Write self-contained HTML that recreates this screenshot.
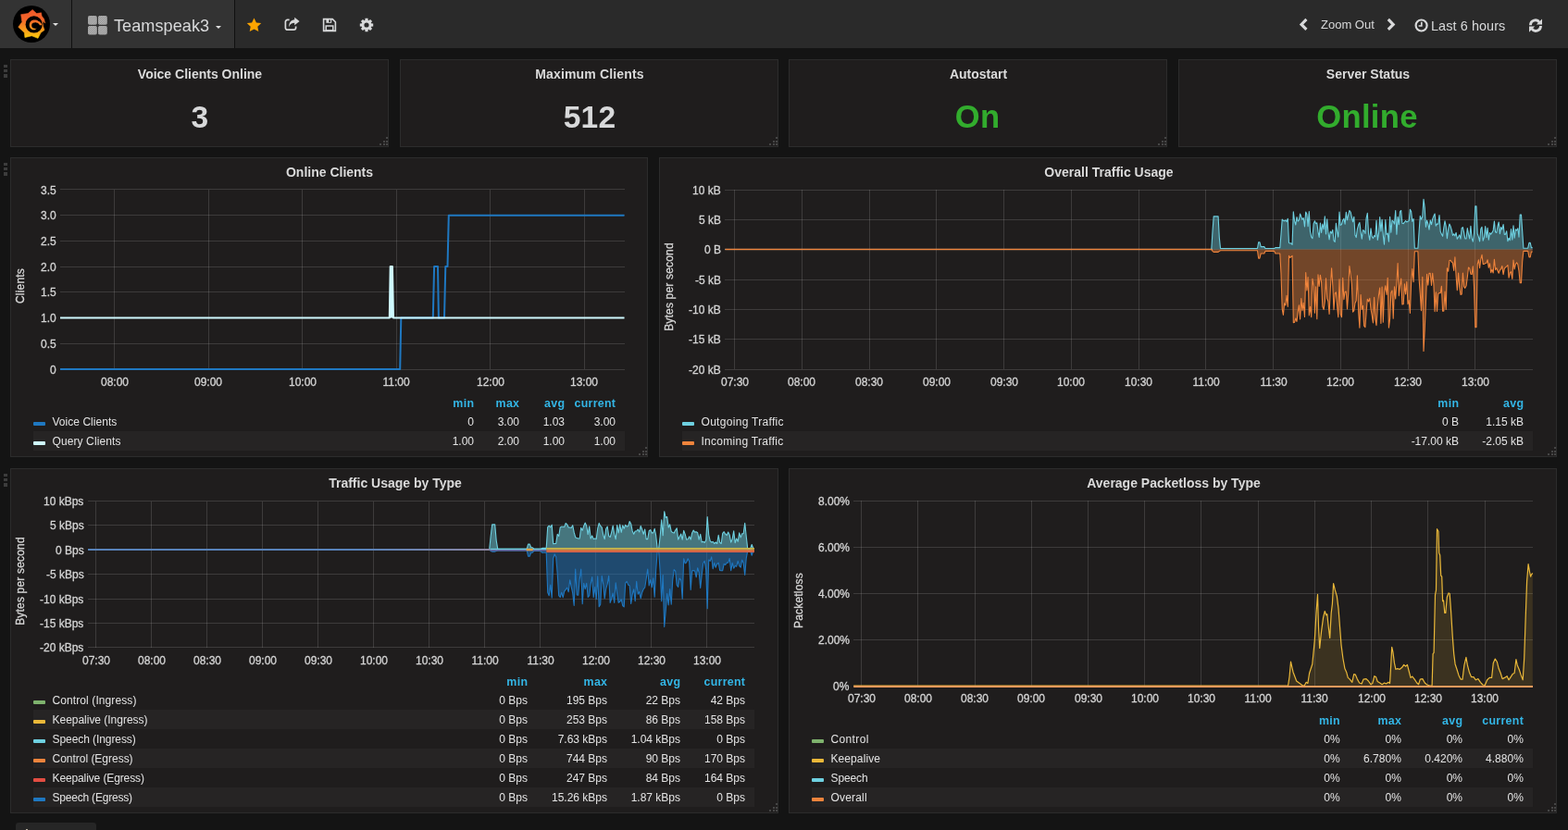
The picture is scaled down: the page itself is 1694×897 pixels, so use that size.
<!DOCTYPE html><html><head><meta charset="utf-8"><title>Grafana - Teamspeak3</title><style>
html,body{margin:0;padding:0;background:#141414;}
body{width:1694px;height:897px;overflow:hidden;position:relative;font-family:"Liberation Sans", sans-serif;color:#d8d9da;}
.abs{position:absolute;overflow:visible}
.nav{position:absolute;left:0;top:0;width:1694px;height:52px;background:#2a2a2a}
.nav-brand{position:absolute;left:0;top:0;width:77px;height:52px;background:#333;border-right:1px solid #101010}
.nav-title{position:absolute;left:78px;top:0;width:175px;height:52px;background:#333;border-right:1px solid #101010}
.caret{position:absolute;width:0;height:0;border-left:3.8px solid transparent;border-right:3.8px solid transparent;border-top:3.9px solid #e0e0e0}
.panel{position:absolute;box-sizing:border-box;background:#1f1d1d;border:1px solid #2c2c2c}
.rz{position:absolute;right:0;bottom:1px;width:9px;height:9px;background:
 linear-gradient(#464646,#464646) 7px 0/2px 2px no-repeat,
 linear-gradient(#464646,#464646) 3.5px 3.5px/2px 2px no-repeat,
 linear-gradient(#464646,#464646) 7px 3.5px/2px 2px no-repeat,
 linear-gradient(#464646,#464646) 0 7px/2px 2px no-repeat,
 linear-gradient(#464646,#464646) 3.5px 7px/2px 2px no-repeat,
 linear-gradient(#464646,#464646) 7px 7px/2px 2px no-repeat}
.rh{position:absolute;left:3.6px;width:4px}
.rh i{display:block;width:4px;height:3.2px;margin-bottom:2px;background:#3c3c3c}
.t{position:absolute;white-space:nowrap;line-height:1.2}
.c{text-align:center}
.navt{will-change:transform;font-size:18.1px;line-height:22px;color:#d8d9da;letter-spacing:0.05px}
.zoom{will-change:transform;font-size:13px;line-height:17px}
.last{will-change:transform;letter-spacing:0.1px;font-size:14.4px;line-height:19px}
.pt{font-size:14px;font-weight:bold;line-height:20px;color:#dadada;will-change:transform}
.big{font-size:33.6px;font-weight:bold;line-height:40px;will-change:transform}
.ax{font-size:12px;line-height:14px;color:#d4d4d4;will-change:transform;-webkit-text-stroke:0.3px #d4d4d4}
.yl{letter-spacing:0.18px;text-align:center;transform:rotate(-90deg);transform-origin:50% 50%}
.lh{font-size:12.4px;font-weight:bold;color:#33b5e5;line-height:14px;letter-spacing:0.3px;margin-right:-0.3px}
.lg{font-size:12px;line-height:14px;color:#e3e3e3}
.li{position:absolute;width:13.2px;height:3.8px;border-radius:1px}
.stripe{position:absolute;height:21px;background:#262424}
.addrow{position:absolute;left:17px;top:889px;width:87px;height:30px;background:#262626;border-radius:3px 3px 0 0}
.addrow span{position:absolute;left:10px;top:9px;font-size:11px;color:#d8d9da}
</style></head><body>
<div class="nav"></div>
<div class="nav-brand"></div>
<div class="nav-title"></div>
<svg class="abs" style="left:13.1px;top:4.5px" width="42" height="42" viewBox="0 0 42 42">
<defs><linearGradient id="lg" gradientUnits="userSpaceOnUse" x1="0" y1="5" x2="0" y2="37"><stop offset="0" stop-color="#f0592a"/><stop offset="0.35" stop-color="#f2652a"/><stop offset="0.7" stop-color="#f89c1c"/><stop offset="1" stop-color="#fccf0a"/></linearGradient></defs>
<circle cx="21" cy="21" r="20" fill="#000"/>
<path fill="url(#lg)" stroke="url(#lg)" stroke-width="0.6" stroke-linejoin="round" d="M22.13,5.47 L26.48,9.58 L31.52,8.83 L32.1,12.3 L34.59,15.49 L35.63,20.12 L33.6,17.4 L33.14,20.53 L33.6,23.31 L34.99,27.54 L31.11,30.26 L28.04,36.35 L21.26,33.74 L13.9,35.48 L13.32,30.15 L6.78,24.29 L10.83,18.67 L9.67,10.68 L17.21,9.58 Z"/>
<circle cx="23.69" cy="21.46" r="9.1" fill="#000"/>
<path fill="url(#lg)" d="M32.56,22.27 L32.23,21.24 L31.51,20.36 L30.77,19.62 L30.27,18.86 L29.49,18.33 L28.69,17.93 L28.08,17.42 L27.42,17.01 L26.7,16.72 L25.95,16.54 L25.21,16.45 L24.48,16.42 L23.77,16.42 L23.06,16.49 L22.37,16.66 L21.71,16.93 L21.11,17.29 L20.56,17.71 L20.08,18.2 L19.67,18.74 L19.33,19.32 L19.07,19.92 L18.87,20.55 L18.74,21.18 L18.67,21.81 L18.66,22.45 L18.72,23.08 L18.87,23.7 L19.09,24.3 L19.38,24.86 L19.74,25.38 L20.16,25.85 L20.63,26.27 L21.15,26.62 L21.7,26.91 L22.29,27.13 L22.89,27.28 L23.51,27.35 L24.13,27.34 L24.73,27.15 L25.26,26.82 L25.71,26.41 L26.11,26 L26.51,25.65 L26.47,25.6 L26.01,25.83 L25.48,25.89 L24.96,25.83 L24.48,25.72 L24.05,25.64 L23.63,25.61 L23.23,25.54 L22.85,25.39 L22.51,25.18 L22.2,24.93 L21.94,24.64 L21.73,24.33 L21.57,24 L21.44,23.67 L21.36,23.33 L21.3,23 L21.27,22.68 L21.26,22.36 L21.27,22.04 L21.31,21.72 L21.39,21.41 L21.5,21.11 L21.65,20.83 L21.83,20.56 L22.05,20.32 L22.29,20.1 L22.56,19.91 L22.86,19.76 L23.17,19.65 L23.49,19.57 L23.82,19.54 L24.16,19.51 L24.53,19.4 L24.96,19.28 L25.43,19.21 L25.91,19.23 L26.36,19.4 L26.76,19.67 L27.43,19.77 L28.11,20.01 L28.48,20.5 L29.01,20.99 L29.54,21.57 L29.78,22.27 Z"/>
</svg>
<div class="caret" style="left:57px;top:25px"></div>
<svg class="abs" style="left:94.8px;top:17px" width="21" height="21" viewBox="0 0 21 21">
<defs><pattern id="hat" width="1.6" height="1.6" patternUnits="userSpaceOnUse" patternTransform="rotate(-45)"><rect width="1.6" height="1.6" fill="#bcbcbc"/><rect width="1.6" height="0.7" fill="#878787"/></pattern></defs>
<g fill="url(#hat)"><rect x="0" y="0" width="9.8" height="9.7" rx="1.8"/><rect x="11" y="0" width="9.8" height="9.7" rx="1.8"/><rect x="0" y="10.9" width="9.8" height="9.7" rx="1.8"/><rect x="11" y="10.9" width="9.8" height="9.7" rx="1.8"/></g></svg>
<div class="t navt" style="left:122.6px;top:16.9px;">Teamspeak3</div>
<div class="caret" style="left:232.6px;top:28.1px"></div>
<svg class="abs" style="left:266px;top:19px" width="17" height="16" viewBox="0 0 17 16"><path fill="#ffa500" d="M8.5,0.6 L10.9,5.4 L16.2,6.1 L12.3,9.8 L13.3,15.1 L8.5,12.5 L3.7,15.1 L4.7,9.8 L0.8,6.1 L6.1,5.4 Z"/></svg>
<svg class="abs" style="left:307px;top:18px" width="18" height="16" viewBox="0 0 18 16"><g fill="none" stroke="#d8d9da" stroke-width="1.7"><path d="M5.6,3.4 H3.6 A2.2,2.2 0 0 0 1.4,5.6 V12 A2.2,2.2 0 0 0 3.6,14.2 H10.4 A2.2,2.2 0 0 0 12.6,12 V10.6"/></g><path fill="#d8d9da" d="M11.2,0.8 L16.6,5.0 L11.2,9.2 V6.8 C8.2,6.8 6.4,8.0 5.2,11.2 C5.0,6.2 7.6,3.4 11.2,3.2 Z"/></svg>
<svg class="abs" style="left:348px;top:19px" width="16" height="16" viewBox="0 0 16 16"><path fill="none" stroke="#d8d9da" stroke-width="1.6" d="M1.6,1.6 H11.2 L14.4,4.8 V14.4 H1.6 Z"/><rect x="4.2" y="9" width="7.6" height="5" fill="none" stroke="#d8d9da" stroke-width="1.5"/><rect x="4.4" y="1.8" width="5.8" height="4" fill="#d8d9da"/><rect x="7.4" y="2.4" width="1.6" height="2.6" fill="#2a2a2a"/></svg>
<svg class="abs" style="left:388px;top:19px" width="16" height="16" viewBox="0 0 16 16"><path fill="#d8d9da" fill-rule="evenodd" d="M6.5,0.8 L9.5,0.8 L9.7,2.9 L10.4,3.2 L12,1.9 L14.1,4 L12.8,5.6 L13.1,6.3 L15.2,6.5 L15.2,9.5 L13.1,9.7 L12.8,10.4 L14.1,12 L12,14.1 L10.4,12.8 L9.7,13.1 L9.5,15.2 L6.5,15.2 L6.3,13.1 L5.6,12.8 L4,14.1 L1.9,12 L3.2,10.4 L2.9,9.7 L0.8,9.5 L0.8,6.5 L2.9,6.3 L3.2,5.6 L1.9,4 L4,1.9 L5.6,3.2 L6.3,2.9 Z M8,5.4 A2.6,2.6 0 1 0 8,10.6 A2.6,2.6 0 1 0 8,5.4 Z"/></svg>
<svg class="abs" style="left:1403px;top:19px" width="10" height="15" viewBox="0 0 10 15"><path fill="none" stroke="#d8d9da" stroke-width="3.1" d="M8.4,1.9 L3.0,7.4 L8.4,12.9"/></svg>
<div class="t zoom" style="left:1427px;top:17.8px;">Zoom Out</div>
<svg class="abs" style="left:1498px;top:19px" width="10" height="15" viewBox="0 0 10 15"><path fill="none" stroke="#d8d9da" stroke-width="3.1" d="M1.8,1.9 L7.2,7.4 L1.8,12.9"/></svg>
<svg class="abs" style="left:1528px;top:20px" width="15" height="15" viewBox="0 0 15 15"><circle cx="7.6" cy="7.5" r="6" fill="none" stroke="#d8d9da" stroke-width="2.2"/><path d="M7.8,3.8 V8 H4.6" fill="none" stroke="#d8d9da" stroke-width="1.7"/></svg>
<div class="t last" style="left:1546px;top:19px;">Last 6 hours</div>
<svg class="abs" style="left:1651px;top:19.5px" width="16" height="16" viewBox="0 0 16 16"><g fill="none" stroke="#d8d9da" stroke-width="2.9"><path d="M12.2,4.2 A5.3,5.3 0 0 0 2.5,7.2"/><path d="M3.8,11.0 A5.3,5.3 0 0 0 13.5,8.0"/></g><path fill="#d8d9da" d="M15.0,0.4 L15.0,6.6 L8.8,6.6 Z M1.0,14.8 L1.0,8.6 L7.2,8.6 Z"/></svg>
<div class="rh" style="top:70px"><i></i><i></i><i></i></div>
<div class="panel" style="left:11px;top:64px;width:409px;height:95px"><i class="rz"></i></div>
<div class="t pt c" style="left:16px;width:400px;top:70px;">Voice Clients Online</div>
<div class="t big c" style="left:15.9px;width:400px;top:106.7px;color:#d8d9da;letter-spacing:0.2px">3</div>
<div class="panel" style="left:432px;top:64px;width:409px;height:95px"><i class="rz"></i></div>
<div class="t pt c" style="left:437px;width:400px;top:70px;letter-spacing:0.17px">Maximum Clients</div>
<div class="t big c" style="left:436.9px;width:400px;top:106.7px;color:#d8d9da;letter-spacing:0.2px">512</div>
<div class="panel" style="left:852px;top:64px;width:409px;height:95px"><i class="rz"></i></div>
<div class="t pt c" style="left:857px;width:400px;top:70px;">Autostart</div>
<div class="t big c" style="left:856.9px;width:400px;top:106.7px;color:#32ac2d;letter-spacing:0.3px;font-size:34.6px;margin-top:-0.4px;margin-left:-0.6px">On</div>
<div class="panel" style="left:1273px;top:64px;width:409px;height:95px"><i class="rz"></i></div>
<div class="t pt c" style="left:1278px;width:400px;top:70px;">Server Status</div>
<div class="t big c" style="left:1277.9px;width:400px;top:106.7px;color:#32ac2d;letter-spacing:0.3px;font-size:34.6px;margin-top:-0.4px;margin-left:-0.6px">Online</div>
<div class="rh" style="top:176px"><i></i><i></i><i></i></div>
<div class="panel" style="left:11px;top:170px;width:689px;height:324px"><i class="rz"></i></div>
<div class="t pt c" style="left:156.1px;width:400px;top:176px;">Online Clients</div>
<svg class="abs" style="left:0;top:0" width="1694" height="897" viewBox="0 0 1694 897"><path d="M65,399.5 H675 M65,371.5 H675 M65,343.5 H675 M65,315.5 H675 M65,288.5 H675 M65,260.5 H675 M65,232.5 H675 M65,204.5 H675" stroke="#c8c8c8" stroke-opacity="0.18" stroke-width="1" fill="none" shape-rendering="crispEdges"/><path d="M123.5,205 V399 M225.5,205 V399 M326.5,205 V399 M428.5,205 V399 M529.5,205 V399 M631.5,205 V399" stroke="#c8c8c8" stroke-opacity="0.18" stroke-width="1" fill="none" shape-rendering="crispEdges"/><path d="M65,399 L432.2,399 L433.3,343.6 L467.8,343.6 L469.1,288.1 L473,288.1 L473.9,343.6 L480,343.6 L481.3,288.1 L483.5,288.1 L484.8,232.7 L674.5,232.7" fill="none" stroke="#1f78c1" stroke-width="2" stroke-linejoin="round"/><path d="M65,343.6 L420.8,343.6 L421.7,288.1 L423.9,288.1 L425,343.6 L674.5,343.6" fill="none" stroke="#cffaff" stroke-width="2" stroke-linejoin="round"/><path d="M420.8,343.6 L421.7,288.1 L423.9,288.1 L425,343.6 Z" fill="#cffaff"/></svg>
<div class="t ax" style="right:1633.6px;top:392.5px;">0</div>
<div class="t ax" style="right:1633.6px;top:364.8px;">0.5</div>
<div class="t ax" style="right:1633.6px;top:337.1px;">1.0</div>
<div class="t ax" style="right:1633.6px;top:309.4px;">1.5</div>
<div class="t ax" style="right:1633.6px;top:281.6px;">2.0</div>
<div class="t ax" style="right:1633.6px;top:253.9px;">2.5</div>
<div class="t ax" style="right:1633.6px;top:226.2px;">3.0</div>
<div class="t ax" style="right:1633.6px;top:198.5px;">3.5</div>
<div class="t ax c" style="left:-76.3px;width:400px;top:406px;">08:00</div>
<div class="t ax c" style="left:25.2px;width:400px;top:406px;">09:00</div>
<div class="t ax c" style="left:126.7px;width:400px;top:406px;">10:00</div>
<div class="t ax c" style="left:228.2px;width:400px;top:406px;">11:00</div>
<div class="t ax c" style="left:329.7px;width:400px;top:406px;">12:00</div>
<div class="t ax c" style="left:431.2px;width:400px;top:406px;">13:00</div>
<div class="t ax yl" style="left:-77.8px;top:302px;width:200px">Clients</div>
<div class="t lh" style="right:1182px;top:428.8px;">min</div>
<div class="t lh" style="right:1133px;top:428.8px;">max</div>
<div class="t lh" style="right:1084px;top:428.8px;">avg</div>
<div class="t lh" style="right:1029px;top:428.8px;">current</div>
<div class="li" style="left:36px;top:456px;background:#1f78c1"></div>
<div class="t lg" style="left:56.5px;top:448.9px;letter-spacing:0.033px">Voice Clients</div>
<div class="t lg" style="right:1182px;top:448.9px;">0</div>
<div class="t lg" style="right:1133px;top:448.9px;">3.00</div>
<div class="t lg" style="right:1084px;top:448.9px;">1.03</div>
<div class="t lg" style="right:1029px;top:448.9px;">3.00</div>
<div class="stripe" style="left:36px;top:466px;width:639px"></div>
<div class="li" style="left:36px;top:477px;background:#cffaff"></div>
<div class="t lg" style="left:56.5px;top:469.9px;letter-spacing:0.1px">Query Clients</div>
<div class="t lg" style="right:1182px;top:469.9px;">1.00</div>
<div class="t lg" style="right:1133px;top:469.9px;">2.00</div>
<div class="t lg" style="right:1084px;top:469.9px;">1.00</div>
<div class="t lg" style="right:1029px;top:469.9px;">1.00</div>
<div class="panel" style="left:712px;top:170px;width:970px;height:324px"><i class="rz"></i></div>
<div class="t pt c" style="left:997.6px;width:400px;top:176px;">Overall Traffic Usage</div>
<svg class="abs" style="left:0;top:0" width="1694" height="897" viewBox="0 0 1694 897"><path d="M783.3,205.5 H1656 M783.3,237.5 H1656 M783.3,269.5 H1656 M783.3,302.5 H1656 M783.3,334.5 H1656 M783.3,366.5 H1656 M783.3,399.5 H1656" stroke="#c8c8c8" stroke-opacity="0.18" stroke-width="1" fill="none" shape-rendering="crispEdges"/><path d="M793.5,205 V399 M866.5,205 V399 M939.5,205 V399 M1011.5,205 V399 M1084.5,205 V399 M1157.5,205 V399 M1230.5,205 V399 M1302.5,205 V399 M1375.5,205 V399 M1448.5,205 V399 M1521.5,205 V399 M1593.5,205 V399" stroke="#c8c8c8" stroke-opacity="0.18" stroke-width="1" fill="none" shape-rendering="crispEdges"/><path d="M783.8,269.5 L785,269.5 L786.2,269.5 L787.4,269.5 L788.6,269.5 L789.9,269.5 L791.1,269.5 L792.3,269.5 L793.5,269.5 L794.7,269.5 L795.9,269.5 L797.1,269.5 L798.4,269.5 L799.6,269.5 L800.8,269.5 L802,269.5 L803.2,269.5 L804.4,269.5 L805.6,269.5 L806.8,269.5 L808,269.5 L809.3,269.5 L810.5,269.5 L811.7,269.5 L812.9,269.5 L814.1,269.5 L815.3,269.5 L816.5,269.5 L817.8,269.5 L819,269.5 L820.2,269.5 L821.4,269.5 L822.6,269.5 L823.8,269.5 L825,269.5 L826.2,269.5 L827.5,269.5 L828.7,269.5 L829.9,269.5 L831.1,269.5 L832.3,269.5 L833.5,269.5 L834.7,269.5 L835.9,269.5 L837.1,269.5 L838.4,269.5 L839.6,269.5 L840.8,269.5 L842,269.5 L843.2,269.5 L844.4,269.5 L845.6,269.5 L846.9,269.5 L848.1,269.5 L849.3,269.5 L850.5,269.5 L851.7,269.5 L852.9,269.5 L854.1,269.5 L855.3,269.5 L856.5,269.5 L857.8,269.5 L859,269.5 L860.2,269.5 L861.4,269.5 L862.6,269.5 L863.8,269.5 L865,269.5 L866.2,269.5 L867.5,269.5 L868.7,269.5 L869.9,269.5 L871.1,269.5 L872.3,269.5 L873.5,269.5 L874.7,269.5 L876,269.5 L877.2,269.5 L878.4,269.5 L879.6,269.5 L880.8,269.5 L882,269.5 L883.2,269.5 L884.4,269.5 L885.6,269.5 L886.9,269.5 L888.1,269.5 L889.3,269.5 L890.5,269.5 L891.7,269.5 L892.9,269.5 L894.1,269.5 L895.4,269.5 L896.6,269.5 L897.8,269.5 L899,269.5 L900.2,269.5 L901.4,269.5 L902.6,269.5 L903.8,269.5 L905,269.5 L906.3,269.5 L907.5,269.5 L908.7,269.5 L909.9,269.5 L911.1,269.5 L912.3,269.5 L913.5,269.5 L914.8,269.5 L916,269.5 L917.2,269.5 L918.4,269.5 L919.6,269.5 L920.8,269.5 L922,269.5 L923.2,269.5 L924.5,269.5 L925.7,269.5 L926.9,269.5 L928.1,269.5 L929.3,269.5 L930.5,269.5 L931.7,269.5 L932.9,269.5 L934.1,269.5 L935.4,269.5 L936.6,269.5 L937.8,269.5 L939,269.5 L940.2,269.5 L941.4,269.5 L942.6,269.5 L943.9,269.5 L945.1,269.5 L946.3,269.5 L947.5,269.5 L948.7,269.5 L949.9,269.5 L951.1,269.5 L952.3,269.5 L953.5,269.5 L954.8,269.5 L956,269.5 L957.2,269.5 L958.4,269.5 L959.6,269.5 L960.8,269.5 L962,269.5 L963.2,269.5 L964.5,269.5 L965.7,269.5 L966.9,269.5 L968.1,269.5 L969.3,269.5 L970.5,269.5 L971.7,269.5 L973,269.5 L974.2,269.5 L975.4,269.5 L976.6,269.5 L977.8,269.5 L979,269.5 L980.2,269.5 L981.4,269.5 L982.6,269.5 L983.9,269.5 L985.1,269.5 L986.3,269.5 L987.5,269.5 L988.7,269.5 L989.9,269.5 L991.1,269.5 L992.4,269.5 L993.6,269.5 L994.8,269.5 L996,269.5 L997.2,269.5 L998.4,269.5 L999.6,269.5 L1000.8,269.5 L1002,269.5 L1003.3,269.5 L1004.5,269.5 L1005.7,269.5 L1006.9,269.5 L1008.1,269.5 L1009.3,269.5 L1010.5,269.5 L1011.8,269.5 L1013,269.5 L1014.2,269.5 L1015.4,269.5 L1016.6,269.5 L1017.8,269.5 L1019,269.5 L1020.2,269.5 L1021.5,269.5 L1022.7,269.5 L1023.9,269.5 L1025.1,269.5 L1026.3,269.5 L1027.5,269.5 L1028.7,269.5 L1029.9,269.5 L1031.2,269.5 L1032.4,269.5 L1033.6,269.5 L1034.8,269.5 L1036,269.5 L1037.2,269.5 L1038.4,269.5 L1039.6,269.5 L1040.8,269.5 L1042.1,269.5 L1043.3,269.5 L1044.5,269.5 L1045.7,269.5 L1046.9,269.5 L1048.1,269.5 L1049.3,269.5 L1050.5,269.5 L1051.8,269.5 L1053,269.5 L1054.2,269.5 L1055.4,269.5 L1056.6,269.5 L1057.8,269.5 L1059,269.5 L1060.2,269.5 L1061.5,269.5 L1062.7,269.5 L1063.9,269.5 L1065.1,269.5 L1066.3,269.5 L1067.5,269.5 L1068.7,269.5 L1070,269.5 L1071.2,269.5 L1072.4,269.5 L1073.6,269.5 L1074.8,269.5 L1076,269.5 L1077.2,269.5 L1078.4,269.5 L1079.7,269.5 L1080.9,269.5 L1082.1,269.5 L1083.3,269.5 L1084.5,269.5 L1085.7,269.5 L1086.9,269.5 L1088.1,269.5 L1089.3,269.5 L1090.6,269.5 L1091.8,269.5 L1093,269.5 L1094.2,269.5 L1095.4,269.5 L1096.6,269.5 L1097.8,269.5 L1099,269.5 L1100.3,269.5 L1101.5,269.5 L1102.7,269.5 L1103.9,269.5 L1105.1,269.5 L1106.3,269.5 L1107.5,269.5 L1108.8,269.5 L1110,269.5 L1111.2,269.5 L1112.4,269.5 L1113.6,269.5 L1114.8,269.5 L1116,269.5 L1117.2,269.5 L1118.5,269.5 L1119.7,269.5 L1120.9,269.5 L1122.1,269.5 L1123.3,269.5 L1124.5,269.5 L1125.7,269.5 L1126.9,269.5 L1128.2,269.5 L1129.4,269.5 L1130.6,269.5 L1131.8,269.5 L1133,269.5 L1134.2,269.5 L1135.4,269.5 L1136.6,269.5 L1137.8,269.5 L1139.1,269.5 L1140.3,269.5 L1141.5,269.5 L1142.7,269.5 L1143.9,269.5 L1145.1,269.5 L1146.3,269.5 L1147.5,269.5 L1148.8,269.5 L1150,269.5 L1151.2,269.5 L1152.4,269.5 L1153.6,269.5 L1154.8,269.5 L1156,269.5 L1157.2,269.5 L1158.5,269.5 L1159.7,269.5 L1160.9,269.5 L1162.1,269.5 L1163.3,269.5 L1164.5,269.5 L1165.7,269.5 L1167,269.5 L1168.2,269.5 L1169.4,269.5 L1170.6,269.5 L1171.8,269.5 L1173,269.5 L1174.2,269.5 L1175.4,269.5 L1176.7,269.5 L1177.9,269.5 L1179.1,269.5 L1180.3,269.5 L1181.5,269.5 L1182.7,269.5 L1183.9,269.5 L1185.1,269.5 L1186.3,269.5 L1187.6,269.5 L1188.8,269.5 L1190,269.5 L1191.2,269.5 L1192.4,269.5 L1193.6,269.5 L1194.8,269.5 L1196,269.5 L1197.3,269.5 L1198.5,269.5 L1199.7,269.5 L1200.9,269.5 L1202.1,269.5 L1203.3,269.5 L1204.5,269.5 L1205.8,269.5 L1207,269.5 L1208.2,269.5 L1209.4,269.5 L1210.6,269.5 L1211.8,269.5 L1213,269.5 L1214.2,269.5 L1215.5,269.5 L1216.7,269.5 L1217.9,269.5 L1219.1,269.5 L1220.3,269.5 L1221.5,269.5 L1222.7,269.5 L1223.9,269.5 L1225.2,269.5 L1226.4,269.5 L1227.6,269.5 L1228.8,269.5 L1230,269.5 L1231.2,269.5 L1232.4,269.5 L1233.6,269.5 L1234.8,269.5 L1236.1,269.5 L1237.3,269.5 L1238.5,269.5 L1239.7,269.5 L1240.9,269.5 L1242.1,269.5 L1243.3,269.5 L1244.5,269.5 L1245.8,269.5 L1247,269.5 L1248.2,269.5 L1249.4,269.5 L1250.6,269.5 L1251.8,269.5 L1253,269.5 L1254.2,269.5 L1255.5,269.5 L1256.7,269.5 L1257.9,269.5 L1259.1,269.5 L1260.3,269.5 L1261.5,269.5 L1262.7,269.5 L1264,269.5 L1265.2,269.5 L1266.4,269.5 L1267.6,269.5 L1268.8,269.5 L1270,269.5 L1271.2,269.5 L1272.4,269.5 L1273.7,269.5 L1274.9,269.5 L1276.1,269.5 L1277.3,269.5 L1278.5,269.5 L1279.7,269.5 L1280.9,269.5 L1282.1,269.5 L1283.3,269.5 L1284.6,269.5 L1285.8,269.5 L1287,269.5 L1288.2,269.5 L1289.4,269.5 L1290.6,269.5 L1291.8,269.5 L1293,269.5 L1294.3,269.5 L1295.5,269.5 L1296.7,269.5 L1297.9,269.5 L1299.1,269.5 L1300.3,269.5 L1301.5,269.5 L1302.8,269.5 L1304,269.5 L1305.2,269.5 L1306.4,269.5 L1307.6,269.5 L1308.8,269.5 L1310,250.1 L1311.2,233.9 L1312.5,233.9 L1313.7,233.9 L1314.9,233.9 L1316.1,233.9 L1317.3,256.6 L1318.5,268.5 L1319.7,268.5 L1320.9,268.5 L1322.2,268.5 L1323.4,268.5 L1324.6,268.5 L1325.8,268.5 L1327,268.5 L1328.2,268.5 L1329.4,268.5 L1330.6,268.5 L1331.8,268.5 L1333.1,268.5 L1334.3,268.5 L1335.5,268.5 L1336.7,268.5 L1337.9,268.5 L1339.1,268.5 L1340.3,268.5 L1341.5,268.5 L1342.8,268.5 L1344,268.5 L1345.2,268.5 L1346.4,268.5 L1347.6,268.5 L1348.8,268.5 L1350,268.5 L1351.2,268.5 L1352.5,268.5 L1353.7,268.5 L1354.9,268.5 L1356.1,268.5 L1357.3,268.5 L1358.5,268.5 L1359.7,261.7 L1360.9,261.7 L1362.2,266.6 L1363.4,266.6 L1364.6,266.6 L1365.8,266.6 L1367,268.5 L1368.2,268.5 L1369.4,268.5 L1370.7,268.5 L1371.9,268.5 L1373.1,268.5 L1374.3,268.5 L1375.5,268.5 L1376.7,268.5 L1377.9,267.6 L1379.1,267.6 L1380.3,267.6 L1381.6,267.6 L1382.8,267.6 L1384,253.3 L1385.2,237.1 L1386.4,238.3 L1387.6,238.9 L1388.8,237.9 L1390,239.6 L1391.3,236.2 L1392.5,262.6 L1393.7,263 L1394.9,262.9 L1396.1,264.4 L1397.3,228.8 L1398.5,238.4 L1399.8,243 L1401,234.5 L1402.2,239.1 L1403.4,237.9 L1404.6,231.1 L1405.8,234.3 L1407,237.2 L1408.2,235.5 L1409.5,244.9 L1410.7,229.1 L1411.9,231.5 L1413.1,244.8 L1414.3,228.6 L1415.5,250.2 L1416.7,256 L1417.9,257.7 L1419.2,241.6 L1420.4,238.8 L1421.6,241.8 L1422.8,240.9 L1424,250.4 L1425.2,256.5 L1426.4,241.1 L1427.6,251.4 L1428.8,242 L1430.1,247.8 L1431.3,233.9 L1432.5,252.9 L1433.7,236.8 L1434.9,250.9 L1436.1,258.9 L1437.3,250 L1438.6,252.1 L1439.8,248.3 L1441,259.9 L1442.2,261.5 L1443.4,241.4 L1444.6,250 L1445.8,256.1 L1447,229 L1448.2,243.5 L1449.5,242.4 L1450.7,238 L1451.9,236.2 L1453.1,242.2 L1454.3,229.2 L1455.5,237.8 L1456.7,232.3 L1457.9,227.5 L1459.2,229.3 L1460.4,234.6 L1461.6,239.8 L1462.8,234.2 L1464,254.1 L1465.2,256.6 L1466.4,247.6 L1467.7,242.8 L1468.9,240.6 L1470.1,250.5 L1471.3,258.1 L1472.5,248.6 L1473.7,249.4 L1474.9,252.4 L1476.1,235.9 L1477.3,230.3 L1478.6,253 L1479.8,259.4 L1481,246.7 L1482.2,255.5 L1483.4,257.6 L1484.6,254.6 L1485.8,255.8 L1487,238.3 L1488.3,259.5 L1489.5,252.2 L1490.7,234.6 L1491.9,249.9 L1493.1,237.3 L1494.3,254.1 L1495.5,264.3 L1496.8,237.6 L1498,253.4 L1499.2,252.2 L1500.4,261.2 L1501.6,234.2 L1502.8,251.2 L1504,238.2 L1505.2,239.1 L1506.5,242.1 L1507.7,227.5 L1508.9,253.1 L1510.1,234.2 L1511.3,242.7 L1512.5,228.7 L1513.7,227.5 L1514.9,241.2 L1516.2,241.6 L1517.4,240.1 L1518.6,238.5 L1519.8,240 L1521,239.1 L1522.2,238.8 L1523.4,226.2 L1524.6,228.4 L1525.8,239.4 L1527.1,236.4 L1528.3,268.2 L1529.5,268.2 L1530.7,268.2 L1531.9,268.2 L1533.1,250.1 L1534.3,233.4 L1535.5,237.1 L1536.8,234 L1538,215.2 L1539.2,224.2 L1540.4,245.3 L1541.6,238.2 L1542.8,241.8 L1544,248.2 L1545.2,238 L1546.5,242.6 L1547.7,236.6 L1548.9,233.6 L1550.1,231.1 L1551.3,244.1 L1552.5,241.9 L1553.7,242.3 L1555,232.5 L1556.2,250.2 L1557.4,253.1 L1558.6,255.3 L1559.8,246.1 L1561,238.8 L1562.2,244.6 L1563.4,257.7 L1564.7,247.3 L1565.9,242.1 L1567.1,244.6 L1568.3,248.6 L1569.5,254.4 L1570.7,252.8 L1571.9,254.9 L1573.1,251.4 L1574.3,258.3 L1575.6,256.1 L1576.8,253.8 L1578,258.2 L1579.2,246.5 L1580.4,245.6 L1581.6,251.2 L1582.8,257.9 L1584.1,258 L1585.3,246.5 L1586.5,253.2 L1587.7,257.9 L1588.9,244.2 L1590.1,257.4 L1591.3,261.1 L1592.5,252.6 L1593.8,222.9 L1595,222.9 L1596.2,252.5 L1597.4,256.2 L1598.6,260.9 L1599.8,247.5 L1601,245.2 L1602.2,260.1 L1603.4,256.6 L1604.7,244.5 L1605.9,256.6 L1607.1,246.2 L1608.3,259.1 L1609.5,251.6 L1610.7,253.2 L1611.9,251.4 L1613.2,248.9 L1614.4,239.1 L1615.6,250.8 L1616.8,251.5 L1618,244.5 L1619.2,240 L1620.4,252.7 L1621.6,245.6 L1622.8,248.1 L1624.1,242.6 L1625.3,253.4 L1626.5,253.3 L1627.7,249.8 L1628.9,260.8 L1630.1,257.3 L1631.3,259.7 L1632.5,247.5 L1633.8,259.2 L1635,243.7 L1636.2,257.3 L1637.4,247.9 L1638.6,249 L1639.8,246.7 L1641,256.1 L1642.2,232 L1643.5,232 L1644.7,250.1 L1645.9,268.2 L1647.1,268.2 L1648.3,268.2 L1649.5,268.2 L1650.7,268.2 L1652,262.4 L1653.2,262.4 L1654.4,267.6 L1655.6,267.6 L1655.6,269.5 L783.8,269.5 Z" fill="#6ed0e0" fill-opacity="0.4"/><path d="M783.8,269.5 L785,269.5 L786.2,269.5 L787.4,269.5 L788.6,269.5 L789.9,269.5 L791.1,269.5 L792.3,269.5 L793.5,269.5 L794.7,269.5 L795.9,269.5 L797.1,269.5 L798.4,269.5 L799.6,269.5 L800.8,269.5 L802,269.5 L803.2,269.5 L804.4,269.5 L805.6,269.5 L806.8,269.5 L808,269.5 L809.3,269.5 L810.5,269.5 L811.7,269.5 L812.9,269.5 L814.1,269.5 L815.3,269.5 L816.5,269.5 L817.8,269.5 L819,269.5 L820.2,269.5 L821.4,269.5 L822.6,269.5 L823.8,269.5 L825,269.5 L826.2,269.5 L827.5,269.5 L828.7,269.5 L829.9,269.5 L831.1,269.5 L832.3,269.5 L833.5,269.5 L834.7,269.5 L835.9,269.5 L837.1,269.5 L838.4,269.5 L839.6,269.5 L840.8,269.5 L842,269.5 L843.2,269.5 L844.4,269.5 L845.6,269.5 L846.9,269.5 L848.1,269.5 L849.3,269.5 L850.5,269.5 L851.7,269.5 L852.9,269.5 L854.1,269.5 L855.3,269.5 L856.5,269.5 L857.8,269.5 L859,269.5 L860.2,269.5 L861.4,269.5 L862.6,269.5 L863.8,269.5 L865,269.5 L866.2,269.5 L867.5,269.5 L868.7,269.5 L869.9,269.5 L871.1,269.5 L872.3,269.5 L873.5,269.5 L874.7,269.5 L876,269.5 L877.2,269.5 L878.4,269.5 L879.6,269.5 L880.8,269.5 L882,269.5 L883.2,269.5 L884.4,269.5 L885.6,269.5 L886.9,269.5 L888.1,269.5 L889.3,269.5 L890.5,269.5 L891.7,269.5 L892.9,269.5 L894.1,269.5 L895.4,269.5 L896.6,269.5 L897.8,269.5 L899,269.5 L900.2,269.5 L901.4,269.5 L902.6,269.5 L903.8,269.5 L905,269.5 L906.3,269.5 L907.5,269.5 L908.7,269.5 L909.9,269.5 L911.1,269.5 L912.3,269.5 L913.5,269.5 L914.8,269.5 L916,269.5 L917.2,269.5 L918.4,269.5 L919.6,269.5 L920.8,269.5 L922,269.5 L923.2,269.5 L924.5,269.5 L925.7,269.5 L926.9,269.5 L928.1,269.5 L929.3,269.5 L930.5,269.5 L931.7,269.5 L932.9,269.5 L934.1,269.5 L935.4,269.5 L936.6,269.5 L937.8,269.5 L939,269.5 L940.2,269.5 L941.4,269.5 L942.6,269.5 L943.9,269.5 L945.1,269.5 L946.3,269.5 L947.5,269.5 L948.7,269.5 L949.9,269.5 L951.1,269.5 L952.3,269.5 L953.5,269.5 L954.8,269.5 L956,269.5 L957.2,269.5 L958.4,269.5 L959.6,269.5 L960.8,269.5 L962,269.5 L963.2,269.5 L964.5,269.5 L965.7,269.5 L966.9,269.5 L968.1,269.5 L969.3,269.5 L970.5,269.5 L971.7,269.5 L973,269.5 L974.2,269.5 L975.4,269.5 L976.6,269.5 L977.8,269.5 L979,269.5 L980.2,269.5 L981.4,269.5 L982.6,269.5 L983.9,269.5 L985.1,269.5 L986.3,269.5 L987.5,269.5 L988.7,269.5 L989.9,269.5 L991.1,269.5 L992.4,269.5 L993.6,269.5 L994.8,269.5 L996,269.5 L997.2,269.5 L998.4,269.5 L999.6,269.5 L1000.8,269.5 L1002,269.5 L1003.3,269.5 L1004.5,269.5 L1005.7,269.5 L1006.9,269.5 L1008.1,269.5 L1009.3,269.5 L1010.5,269.5 L1011.8,269.5 L1013,269.5 L1014.2,269.5 L1015.4,269.5 L1016.6,269.5 L1017.8,269.5 L1019,269.5 L1020.2,269.5 L1021.5,269.5 L1022.7,269.5 L1023.9,269.5 L1025.1,269.5 L1026.3,269.5 L1027.5,269.5 L1028.7,269.5 L1029.9,269.5 L1031.2,269.5 L1032.4,269.5 L1033.6,269.5 L1034.8,269.5 L1036,269.5 L1037.2,269.5 L1038.4,269.5 L1039.6,269.5 L1040.8,269.5 L1042.1,269.5 L1043.3,269.5 L1044.5,269.5 L1045.7,269.5 L1046.9,269.5 L1048.1,269.5 L1049.3,269.5 L1050.5,269.5 L1051.8,269.5 L1053,269.5 L1054.2,269.5 L1055.4,269.5 L1056.6,269.5 L1057.8,269.5 L1059,269.5 L1060.2,269.5 L1061.5,269.5 L1062.7,269.5 L1063.9,269.5 L1065.1,269.5 L1066.3,269.5 L1067.5,269.5 L1068.7,269.5 L1070,269.5 L1071.2,269.5 L1072.4,269.5 L1073.6,269.5 L1074.8,269.5 L1076,269.5 L1077.2,269.5 L1078.4,269.5 L1079.7,269.5 L1080.9,269.5 L1082.1,269.5 L1083.3,269.5 L1084.5,269.5 L1085.7,269.5 L1086.9,269.5 L1088.1,269.5 L1089.3,269.5 L1090.6,269.5 L1091.8,269.5 L1093,269.5 L1094.2,269.5 L1095.4,269.5 L1096.6,269.5 L1097.8,269.5 L1099,269.5 L1100.3,269.5 L1101.5,269.5 L1102.7,269.5 L1103.9,269.5 L1105.1,269.5 L1106.3,269.5 L1107.5,269.5 L1108.8,269.5 L1110,269.5 L1111.2,269.5 L1112.4,269.5 L1113.6,269.5 L1114.8,269.5 L1116,269.5 L1117.2,269.5 L1118.5,269.5 L1119.7,269.5 L1120.9,269.5 L1122.1,269.5 L1123.3,269.5 L1124.5,269.5 L1125.7,269.5 L1126.9,269.5 L1128.2,269.5 L1129.4,269.5 L1130.6,269.5 L1131.8,269.5 L1133,269.5 L1134.2,269.5 L1135.4,269.5 L1136.6,269.5 L1137.8,269.5 L1139.1,269.5 L1140.3,269.5 L1141.5,269.5 L1142.7,269.5 L1143.9,269.5 L1145.1,269.5 L1146.3,269.5 L1147.5,269.5 L1148.8,269.5 L1150,269.5 L1151.2,269.5 L1152.4,269.5 L1153.6,269.5 L1154.8,269.5 L1156,269.5 L1157.2,269.5 L1158.5,269.5 L1159.7,269.5 L1160.9,269.5 L1162.1,269.5 L1163.3,269.5 L1164.5,269.5 L1165.7,269.5 L1167,269.5 L1168.2,269.5 L1169.4,269.5 L1170.6,269.5 L1171.8,269.5 L1173,269.5 L1174.2,269.5 L1175.4,269.5 L1176.7,269.5 L1177.9,269.5 L1179.1,269.5 L1180.3,269.5 L1181.5,269.5 L1182.7,269.5 L1183.9,269.5 L1185.1,269.5 L1186.3,269.5 L1187.6,269.5 L1188.8,269.5 L1190,269.5 L1191.2,269.5 L1192.4,269.5 L1193.6,269.5 L1194.8,269.5 L1196,269.5 L1197.3,269.5 L1198.5,269.5 L1199.7,269.5 L1200.9,269.5 L1202.1,269.5 L1203.3,269.5 L1204.5,269.5 L1205.8,269.5 L1207,269.5 L1208.2,269.5 L1209.4,269.5 L1210.6,269.5 L1211.8,269.5 L1213,269.5 L1214.2,269.5 L1215.5,269.5 L1216.7,269.5 L1217.9,269.5 L1219.1,269.5 L1220.3,269.5 L1221.5,269.5 L1222.7,269.5 L1223.9,269.5 L1225.2,269.5 L1226.4,269.5 L1227.6,269.5 L1228.8,269.5 L1230,269.5 L1231.2,269.5 L1232.4,269.5 L1233.6,269.5 L1234.8,269.5 L1236.1,269.5 L1237.3,269.5 L1238.5,269.5 L1239.7,269.5 L1240.9,269.5 L1242.1,269.5 L1243.3,269.5 L1244.5,269.5 L1245.8,269.5 L1247,269.5 L1248.2,269.5 L1249.4,269.5 L1250.6,269.5 L1251.8,269.5 L1253,269.5 L1254.2,269.5 L1255.5,269.5 L1256.7,269.5 L1257.9,269.5 L1259.1,269.5 L1260.3,269.5 L1261.5,269.5 L1262.7,269.5 L1264,269.5 L1265.2,269.5 L1266.4,269.5 L1267.6,269.5 L1268.8,269.5 L1270,269.5 L1271.2,269.5 L1272.4,269.5 L1273.7,269.5 L1274.9,269.5 L1276.1,269.5 L1277.3,269.5 L1278.5,269.5 L1279.7,269.5 L1280.9,269.5 L1282.1,269.5 L1283.3,269.5 L1284.6,269.5 L1285.8,269.5 L1287,269.5 L1288.2,269.5 L1289.4,269.5 L1290.6,269.5 L1291.8,269.5 L1293,269.5 L1294.3,269.5 L1295.5,269.5 L1296.7,269.5 L1297.9,269.5 L1299.1,269.5 L1300.3,269.5 L1301.5,269.5 L1302.8,269.5 L1304,269.5 L1305.2,269.5 L1306.4,269.5 L1307.6,269.5 L1308.8,269.5 L1310,271.4 L1311.2,272.4 L1312.5,272.4 L1313.7,272.4 L1314.9,272.4 L1316.1,272.4 L1317.3,271.4 L1318.5,270.8 L1319.7,270.8 L1320.9,270.8 L1322.2,270.8 L1323.4,270.8 L1324.6,270.8 L1325.8,270.8 L1327,270.8 L1328.2,270.8 L1329.4,270.8 L1330.6,270.8 L1331.8,270.8 L1333.1,270.8 L1334.3,270.8 L1335.5,270.8 L1336.7,270.8 L1337.9,270.8 L1339.1,270.8 L1340.3,270.8 L1341.5,270.8 L1342.8,270.8 L1344,270.8 L1345.2,270.8 L1346.4,270.8 L1347.6,270.8 L1348.8,270.8 L1350,270.8 L1351.2,270.8 L1352.5,270.8 L1353.7,270.8 L1354.9,270.8 L1356.1,270.8 L1357.3,270.8 L1358.5,270.8 L1359.7,279.2 L1360.9,279.2 L1362.2,274 L1363.4,274 L1364.6,274 L1365.8,274 L1367,271.4 L1368.2,271.4 L1369.4,271.4 L1370.7,271.4 L1371.9,271.4 L1373.1,271.4 L1374.3,271.4 L1375.5,271.4 L1376.7,271.4 L1377.9,274 L1379.1,274 L1380.3,274 L1381.6,274 L1382.8,274 L1384,295.4 L1385.2,333.6 L1386.4,340.5 L1387.6,327.8 L1388.8,329.9 L1390,319.2 L1391.3,331.5 L1392.5,276.4 L1393.7,278.5 L1394.9,277.5 L1396.1,276.4 L1397.3,348.6 L1398.5,348.4 L1399.8,344 L1401,347.5 L1402.2,336.9 L1403.4,329.9 L1404.6,345 L1405.8,322.6 L1407,335.7 L1408.2,327.2 L1409.5,342.4 L1410.7,294.5 L1411.9,313.9 L1413.1,299.6 L1414.3,340.9 L1415.5,331.2 L1416.7,342.8 L1417.9,301.2 L1419.2,309.1 L1420.4,338.2 L1421.6,309.9 L1422.8,344.8 L1424,296.7 L1425.2,309.5 L1426.4,297.2 L1427.6,305 L1428.8,331 L1430.1,334.6 L1431.3,325.6 L1432.5,300.7 L1433.7,322.5 L1434.9,325.5 L1436.1,339.5 L1437.3,312.6 L1438.6,289.7 L1439.8,308 L1441,334.7 L1442.2,317.2 L1443.4,315.8 L1444.6,330.1 L1445.8,342.7 L1447,301.7 L1448.2,339.2 L1449.5,342.8 L1450.7,300.2 L1451.9,323.6 L1453.1,315.5 L1454.3,315 L1455.5,333.9 L1456.7,317 L1457.9,287.5 L1459.2,297.2 L1460.4,307.1 L1461.6,337.1 L1462.8,335.6 L1464,327.5 L1465.2,325.1 L1466.4,297.8 L1467.7,337.8 L1468.9,354.2 L1470.1,318.5 L1471.3,334.4 L1472.5,330.4 L1473.7,352.2 L1474.9,353.7 L1476.1,337.3 L1477.3,323.2 L1478.6,325.9 L1479.8,322.3 L1481,334 L1482.2,340.6 L1483.4,348.9 L1484.6,321.4 L1485.8,344.8 L1487,351.6 L1488.3,331 L1489.5,318.8 L1490.7,311.1 L1491.9,349.5 L1493.1,310.1 L1494.3,348.3 L1495.5,316.1 L1496.8,308.7 L1498,318.5 L1499.2,300.3 L1500.4,354.2 L1501.6,344.4 L1502.8,316.4 L1504,314 L1505.2,344.2 L1506.5,309.7 L1507.7,322.9 L1508.9,305.4 L1510.1,284.6 L1511.3,319.7 L1512.5,308.6 L1513.7,301 L1514.9,328.9 L1516.2,328.7 L1517.4,306.8 L1518.6,318 L1519.8,304.6 L1521,328.7 L1522.2,324.6 L1523.4,338.4 L1524.6,305.5 L1525.8,290.5 L1527.1,304.7 L1528.3,271.8 L1529.5,271.8 L1530.7,271.8 L1531.9,271.8 L1533.1,301.8 L1534.3,317.4 L1535.5,335.6 L1536.8,299.4 L1538,379.4 L1539.2,356.8 L1540.4,327 L1541.6,296.3 L1542.8,308.2 L1544,295.4 L1545.2,295.4 L1546.5,308.5 L1547.7,295.4 L1548.9,306.8 L1550.1,336.6 L1551.3,315.8 L1552.5,336.5 L1553.7,317.5 L1555,316.6 L1556.2,316.8 L1557.4,309.2 L1558.6,336.2 L1559.8,336.1 L1561,315.1 L1562.2,334.5 L1563.4,289.8 L1564.7,293.3 L1565.9,281.5 L1567.1,281.2 L1568.3,283.2 L1569.5,284.2 L1570.7,292.4 L1571.9,277.9 L1573.1,298.2 L1574.3,313.7 L1575.6,295.1 L1576.8,310.4 L1578,318.4 L1579.2,318 L1580.4,295.1 L1581.6,309.8 L1582.8,311.3 L1584.1,308.7 L1585.3,299.8 L1586.5,289 L1587.7,290.1 L1588.9,296.2 L1590.1,296.5 L1591.3,287.9 L1592.5,308.9 L1593.8,353.6 L1595,353.6 L1596.2,285.6 L1597.4,280.8 L1598.6,289.7 L1599.8,280.1 L1601,275.3 L1602.2,285.4 L1603.4,285.4 L1604.7,284.6 L1605.9,284.2 L1607.1,280.7 L1608.3,289.3 L1609.5,284.7 L1610.7,294.8 L1611.9,291.2 L1613.2,295 L1614.4,280.4 L1615.6,291.7 L1616.8,289.6 L1618,292.5 L1619.2,295.3 L1620.4,292.1 L1621.6,290.7 L1622.8,287.4 L1624.1,296.6 L1625.3,290.4 L1626.5,288.9 L1627.7,287.8 L1628.9,286.5 L1630.1,300.2 L1631.3,294.8 L1632.5,293.6 L1633.8,301.4 L1635,281 L1636.2,290.9 L1637.4,285.5 L1638.6,283.9 L1639.8,285.8 L1641,292.9 L1642.2,305.7 L1643.5,305.7 L1644.7,282.4 L1645.9,271.4 L1647.1,271.4 L1648.3,271.4 L1649.5,271.4 L1650.7,271.4 L1652,277.9 L1653.2,277.9 L1654.4,272.1 L1655.6,272.1 L1655.6,269.5 L783.8,269.5 Z" fill="#ef843c" fill-opacity="0.4"/><path d="M783.3,269.5 H1310" stroke="#e39a68" stroke-width="1.4" fill="none"/><path d="M783.8,269.5 L785,269.5 L786.2,269.5 L787.4,269.5 L788.6,269.5 L789.9,269.5 L791.1,269.5 L792.3,269.5 L793.5,269.5 L794.7,269.5 L795.9,269.5 L797.1,269.5 L798.4,269.5 L799.6,269.5 L800.8,269.5 L802,269.5 L803.2,269.5 L804.4,269.5 L805.6,269.5 L806.8,269.5 L808,269.5 L809.3,269.5 L810.5,269.5 L811.7,269.5 L812.9,269.5 L814.1,269.5 L815.3,269.5 L816.5,269.5 L817.8,269.5 L819,269.5 L820.2,269.5 L821.4,269.5 L822.6,269.5 L823.8,269.5 L825,269.5 L826.2,269.5 L827.5,269.5 L828.7,269.5 L829.9,269.5 L831.1,269.5 L832.3,269.5 L833.5,269.5 L834.7,269.5 L835.9,269.5 L837.1,269.5 L838.4,269.5 L839.6,269.5 L840.8,269.5 L842,269.5 L843.2,269.5 L844.4,269.5 L845.6,269.5 L846.9,269.5 L848.1,269.5 L849.3,269.5 L850.5,269.5 L851.7,269.5 L852.9,269.5 L854.1,269.5 L855.3,269.5 L856.5,269.5 L857.8,269.5 L859,269.5 L860.2,269.5 L861.4,269.5 L862.6,269.5 L863.8,269.5 L865,269.5 L866.2,269.5 L867.5,269.5 L868.7,269.5 L869.9,269.5 L871.1,269.5 L872.3,269.5 L873.5,269.5 L874.7,269.5 L876,269.5 L877.2,269.5 L878.4,269.5 L879.6,269.5 L880.8,269.5 L882,269.5 L883.2,269.5 L884.4,269.5 L885.6,269.5 L886.9,269.5 L888.1,269.5 L889.3,269.5 L890.5,269.5 L891.7,269.5 L892.9,269.5 L894.1,269.5 L895.4,269.5 L896.6,269.5 L897.8,269.5 L899,269.5 L900.2,269.5 L901.4,269.5 L902.6,269.5 L903.8,269.5 L905,269.5 L906.3,269.5 L907.5,269.5 L908.7,269.5 L909.9,269.5 L911.1,269.5 L912.3,269.5 L913.5,269.5 L914.8,269.5 L916,269.5 L917.2,269.5 L918.4,269.5 L919.6,269.5 L920.8,269.5 L922,269.5 L923.2,269.5 L924.5,269.5 L925.7,269.5 L926.9,269.5 L928.1,269.5 L929.3,269.5 L930.5,269.5 L931.7,269.5 L932.9,269.5 L934.1,269.5 L935.4,269.5 L936.6,269.5 L937.8,269.5 L939,269.5 L940.2,269.5 L941.4,269.5 L942.6,269.5 L943.9,269.5 L945.1,269.5 L946.3,269.5 L947.5,269.5 L948.7,269.5 L949.9,269.5 L951.1,269.5 L952.3,269.5 L953.5,269.5 L954.8,269.5 L956,269.5 L957.2,269.5 L958.4,269.5 L959.6,269.5 L960.8,269.5 L962,269.5 L963.2,269.5 L964.5,269.5 L965.7,269.5 L966.9,269.5 L968.1,269.5 L969.3,269.5 L970.5,269.5 L971.7,269.5 L973,269.5 L974.2,269.5 L975.4,269.5 L976.6,269.5 L977.8,269.5 L979,269.5 L980.2,269.5 L981.4,269.5 L982.6,269.5 L983.9,269.5 L985.1,269.5 L986.3,269.5 L987.5,269.5 L988.7,269.5 L989.9,269.5 L991.1,269.5 L992.4,269.5 L993.6,269.5 L994.8,269.5 L996,269.5 L997.2,269.5 L998.4,269.5 L999.6,269.5 L1000.8,269.5 L1002,269.5 L1003.3,269.5 L1004.5,269.5 L1005.7,269.5 L1006.9,269.5 L1008.1,269.5 L1009.3,269.5 L1010.5,269.5 L1011.8,269.5 L1013,269.5 L1014.2,269.5 L1015.4,269.5 L1016.6,269.5 L1017.8,269.5 L1019,269.5 L1020.2,269.5 L1021.5,269.5 L1022.7,269.5 L1023.9,269.5 L1025.1,269.5 L1026.3,269.5 L1027.5,269.5 L1028.7,269.5 L1029.9,269.5 L1031.2,269.5 L1032.4,269.5 L1033.6,269.5 L1034.8,269.5 L1036,269.5 L1037.2,269.5 L1038.4,269.5 L1039.6,269.5 L1040.8,269.5 L1042.1,269.5 L1043.3,269.5 L1044.5,269.5 L1045.7,269.5 L1046.9,269.5 L1048.1,269.5 L1049.3,269.5 L1050.5,269.5 L1051.8,269.5 L1053,269.5 L1054.2,269.5 L1055.4,269.5 L1056.6,269.5 L1057.8,269.5 L1059,269.5 L1060.2,269.5 L1061.5,269.5 L1062.7,269.5 L1063.9,269.5 L1065.1,269.5 L1066.3,269.5 L1067.5,269.5 L1068.7,269.5 L1070,269.5 L1071.2,269.5 L1072.4,269.5 L1073.6,269.5 L1074.8,269.5 L1076,269.5 L1077.2,269.5 L1078.4,269.5 L1079.7,269.5 L1080.9,269.5 L1082.1,269.5 L1083.3,269.5 L1084.5,269.5 L1085.7,269.5 L1086.9,269.5 L1088.1,269.5 L1089.3,269.5 L1090.6,269.5 L1091.8,269.5 L1093,269.5 L1094.2,269.5 L1095.4,269.5 L1096.6,269.5 L1097.8,269.5 L1099,269.5 L1100.3,269.5 L1101.5,269.5 L1102.7,269.5 L1103.9,269.5 L1105.1,269.5 L1106.3,269.5 L1107.5,269.5 L1108.8,269.5 L1110,269.5 L1111.2,269.5 L1112.4,269.5 L1113.6,269.5 L1114.8,269.5 L1116,269.5 L1117.2,269.5 L1118.5,269.5 L1119.7,269.5 L1120.9,269.5 L1122.1,269.5 L1123.3,269.5 L1124.5,269.5 L1125.7,269.5 L1126.9,269.5 L1128.2,269.5 L1129.4,269.5 L1130.6,269.5 L1131.8,269.5 L1133,269.5 L1134.2,269.5 L1135.4,269.5 L1136.6,269.5 L1137.8,269.5 L1139.1,269.5 L1140.3,269.5 L1141.5,269.5 L1142.7,269.5 L1143.9,269.5 L1145.1,269.5 L1146.3,269.5 L1147.5,269.5 L1148.8,269.5 L1150,269.5 L1151.2,269.5 L1152.4,269.5 L1153.6,269.5 L1154.8,269.5 L1156,269.5 L1157.2,269.5 L1158.5,269.5 L1159.7,269.5 L1160.9,269.5 L1162.1,269.5 L1163.3,269.5 L1164.5,269.5 L1165.7,269.5 L1167,269.5 L1168.2,269.5 L1169.4,269.5 L1170.6,269.5 L1171.8,269.5 L1173,269.5 L1174.2,269.5 L1175.4,269.5 L1176.7,269.5 L1177.9,269.5 L1179.1,269.5 L1180.3,269.5 L1181.5,269.5 L1182.7,269.5 L1183.9,269.5 L1185.1,269.5 L1186.3,269.5 L1187.6,269.5 L1188.8,269.5 L1190,269.5 L1191.2,269.5 L1192.4,269.5 L1193.6,269.5 L1194.8,269.5 L1196,269.5 L1197.3,269.5 L1198.5,269.5 L1199.7,269.5 L1200.9,269.5 L1202.1,269.5 L1203.3,269.5 L1204.5,269.5 L1205.8,269.5 L1207,269.5 L1208.2,269.5 L1209.4,269.5 L1210.6,269.5 L1211.8,269.5 L1213,269.5 L1214.2,269.5 L1215.5,269.5 L1216.7,269.5 L1217.9,269.5 L1219.1,269.5 L1220.3,269.5 L1221.5,269.5 L1222.7,269.5 L1223.9,269.5 L1225.2,269.5 L1226.4,269.5 L1227.6,269.5 L1228.8,269.5 L1230,269.5 L1231.2,269.5 L1232.4,269.5 L1233.6,269.5 L1234.8,269.5 L1236.1,269.5 L1237.3,269.5 L1238.5,269.5 L1239.7,269.5 L1240.9,269.5 L1242.1,269.5 L1243.3,269.5 L1244.5,269.5 L1245.8,269.5 L1247,269.5 L1248.2,269.5 L1249.4,269.5 L1250.6,269.5 L1251.8,269.5 L1253,269.5 L1254.2,269.5 L1255.5,269.5 L1256.7,269.5 L1257.9,269.5 L1259.1,269.5 L1260.3,269.5 L1261.5,269.5 L1262.7,269.5 L1264,269.5 L1265.2,269.5 L1266.4,269.5 L1267.6,269.5 L1268.8,269.5 L1270,269.5 L1271.2,269.5 L1272.4,269.5 L1273.7,269.5 L1274.9,269.5 L1276.1,269.5 L1277.3,269.5 L1278.5,269.5 L1279.7,269.5 L1280.9,269.5 L1282.1,269.5 L1283.3,269.5 L1284.6,269.5 L1285.8,269.5 L1287,269.5 L1288.2,269.5 L1289.4,269.5 L1290.6,269.5 L1291.8,269.5 L1293,269.5 L1294.3,269.5 L1295.5,269.5 L1296.7,269.5 L1297.9,269.5 L1299.1,269.5 L1300.3,269.5 L1301.5,269.5 L1302.8,269.5 L1304,269.5 L1305.2,269.5 L1306.4,269.5 L1307.6,269.5 L1308.8,269.5 L1310,250.1 L1311.2,233.9 L1312.5,233.9 L1313.7,233.9 L1314.9,233.9 L1316.1,233.9 L1317.3,256.6 L1318.5,268.5 L1319.7,268.5 L1320.9,268.5 L1322.2,268.5 L1323.4,268.5 L1324.6,268.5 L1325.8,268.5 L1327,268.5 L1328.2,268.5 L1329.4,268.5 L1330.6,268.5 L1331.8,268.5 L1333.1,268.5 L1334.3,268.5 L1335.5,268.5 L1336.7,268.5 L1337.9,268.5 L1339.1,268.5 L1340.3,268.5 L1341.5,268.5 L1342.8,268.5 L1344,268.5 L1345.2,268.5 L1346.4,268.5 L1347.6,268.5 L1348.8,268.5 L1350,268.5 L1351.2,268.5 L1352.5,268.5 L1353.7,268.5 L1354.9,268.5 L1356.1,268.5 L1357.3,268.5 L1358.5,268.5 L1359.7,261.7 L1360.9,261.7 L1362.2,266.6 L1363.4,266.6 L1364.6,266.6 L1365.8,266.6 L1367,268.5 L1368.2,268.5 L1369.4,268.5 L1370.7,268.5 L1371.9,268.5 L1373.1,268.5 L1374.3,268.5 L1375.5,268.5 L1376.7,268.5 L1377.9,267.6 L1379.1,267.6 L1380.3,267.6 L1381.6,267.6 L1382.8,267.6 L1384,253.3 L1385.2,237.1 L1386.4,238.3 L1387.6,238.9 L1388.8,237.9 L1390,239.6 L1391.3,236.2 L1392.5,262.6 L1393.7,263 L1394.9,262.9 L1396.1,264.4 L1397.3,228.8 L1398.5,238.4 L1399.8,243 L1401,234.5 L1402.2,239.1 L1403.4,237.9 L1404.6,231.1 L1405.8,234.3 L1407,237.2 L1408.2,235.5 L1409.5,244.9 L1410.7,229.1 L1411.9,231.5 L1413.1,244.8 L1414.3,228.6 L1415.5,250.2 L1416.7,256 L1417.9,257.7 L1419.2,241.6 L1420.4,238.8 L1421.6,241.8 L1422.8,240.9 L1424,250.4 L1425.2,256.5 L1426.4,241.1 L1427.6,251.4 L1428.8,242 L1430.1,247.8 L1431.3,233.9 L1432.5,252.9 L1433.7,236.8 L1434.9,250.9 L1436.1,258.9 L1437.3,250 L1438.6,252.1 L1439.8,248.3 L1441,259.9 L1442.2,261.5 L1443.4,241.4 L1444.6,250 L1445.8,256.1 L1447,229 L1448.2,243.5 L1449.5,242.4 L1450.7,238 L1451.9,236.2 L1453.1,242.2 L1454.3,229.2 L1455.5,237.8 L1456.7,232.3 L1457.9,227.5 L1459.2,229.3 L1460.4,234.6 L1461.6,239.8 L1462.8,234.2 L1464,254.1 L1465.2,256.6 L1466.4,247.6 L1467.7,242.8 L1468.9,240.6 L1470.1,250.5 L1471.3,258.1 L1472.5,248.6 L1473.7,249.4 L1474.9,252.4 L1476.1,235.9 L1477.3,230.3 L1478.6,253 L1479.8,259.4 L1481,246.7 L1482.2,255.5 L1483.4,257.6 L1484.6,254.6 L1485.8,255.8 L1487,238.3 L1488.3,259.5 L1489.5,252.2 L1490.7,234.6 L1491.9,249.9 L1493.1,237.3 L1494.3,254.1 L1495.5,264.3 L1496.8,237.6 L1498,253.4 L1499.2,252.2 L1500.4,261.2 L1501.6,234.2 L1502.8,251.2 L1504,238.2 L1505.2,239.1 L1506.5,242.1 L1507.7,227.5 L1508.9,253.1 L1510.1,234.2 L1511.3,242.7 L1512.5,228.7 L1513.7,227.5 L1514.9,241.2 L1516.2,241.6 L1517.4,240.1 L1518.6,238.5 L1519.8,240 L1521,239.1 L1522.2,238.8 L1523.4,226.2 L1524.6,228.4 L1525.8,239.4 L1527.1,236.4 L1528.3,268.2 L1529.5,268.2 L1530.7,268.2 L1531.9,268.2 L1533.1,250.1 L1534.3,233.4 L1535.5,237.1 L1536.8,234 L1538,215.2 L1539.2,224.2 L1540.4,245.3 L1541.6,238.2 L1542.8,241.8 L1544,248.2 L1545.2,238 L1546.5,242.6 L1547.7,236.6 L1548.9,233.6 L1550.1,231.1 L1551.3,244.1 L1552.5,241.9 L1553.7,242.3 L1555,232.5 L1556.2,250.2 L1557.4,253.1 L1558.6,255.3 L1559.8,246.1 L1561,238.8 L1562.2,244.6 L1563.4,257.7 L1564.7,247.3 L1565.9,242.1 L1567.1,244.6 L1568.3,248.6 L1569.5,254.4 L1570.7,252.8 L1571.9,254.9 L1573.1,251.4 L1574.3,258.3 L1575.6,256.1 L1576.8,253.8 L1578,258.2 L1579.2,246.5 L1580.4,245.6 L1581.6,251.2 L1582.8,257.9 L1584.1,258 L1585.3,246.5 L1586.5,253.2 L1587.7,257.9 L1588.9,244.2 L1590.1,257.4 L1591.3,261.1 L1592.5,252.6 L1593.8,222.9 L1595,222.9 L1596.2,252.5 L1597.4,256.2 L1598.6,260.9 L1599.8,247.5 L1601,245.2 L1602.2,260.1 L1603.4,256.6 L1604.7,244.5 L1605.9,256.6 L1607.1,246.2 L1608.3,259.1 L1609.5,251.6 L1610.7,253.2 L1611.9,251.4 L1613.2,248.9 L1614.4,239.1 L1615.6,250.8 L1616.8,251.5 L1618,244.5 L1619.2,240 L1620.4,252.7 L1621.6,245.6 L1622.8,248.1 L1624.1,242.6 L1625.3,253.4 L1626.5,253.3 L1627.7,249.8 L1628.9,260.8 L1630.1,257.3 L1631.3,259.7 L1632.5,247.5 L1633.8,259.2 L1635,243.7 L1636.2,257.3 L1637.4,247.9 L1638.6,249 L1639.8,246.7 L1641,256.1 L1642.2,232 L1643.5,232 L1644.7,250.1 L1645.9,268.2 L1647.1,268.2 L1648.3,268.2 L1649.5,268.2 L1650.7,268.2 L1652,262.4 L1653.2,262.4 L1654.4,267.6 L1655.6,267.6" fill="none" stroke="#6ed0e0" stroke-width="1.1" stroke-linejoin="round"/><path d="M783.8,269.5 L785,269.5 L786.2,269.5 L787.4,269.5 L788.6,269.5 L789.9,269.5 L791.1,269.5 L792.3,269.5 L793.5,269.5 L794.7,269.5 L795.9,269.5 L797.1,269.5 L798.4,269.5 L799.6,269.5 L800.8,269.5 L802,269.5 L803.2,269.5 L804.4,269.5 L805.6,269.5 L806.8,269.5 L808,269.5 L809.3,269.5 L810.5,269.5 L811.7,269.5 L812.9,269.5 L814.1,269.5 L815.3,269.5 L816.5,269.5 L817.8,269.5 L819,269.5 L820.2,269.5 L821.4,269.5 L822.6,269.5 L823.8,269.5 L825,269.5 L826.2,269.5 L827.5,269.5 L828.7,269.5 L829.9,269.5 L831.1,269.5 L832.3,269.5 L833.5,269.5 L834.7,269.5 L835.9,269.5 L837.1,269.5 L838.4,269.5 L839.6,269.5 L840.8,269.5 L842,269.5 L843.2,269.5 L844.4,269.5 L845.6,269.5 L846.9,269.5 L848.1,269.5 L849.3,269.5 L850.5,269.5 L851.7,269.5 L852.9,269.5 L854.1,269.5 L855.3,269.5 L856.5,269.5 L857.8,269.5 L859,269.5 L860.2,269.5 L861.4,269.5 L862.6,269.5 L863.8,269.5 L865,269.5 L866.2,269.5 L867.5,269.5 L868.7,269.5 L869.9,269.5 L871.1,269.5 L872.3,269.5 L873.5,269.5 L874.7,269.5 L876,269.5 L877.2,269.5 L878.4,269.5 L879.6,269.5 L880.8,269.5 L882,269.5 L883.2,269.5 L884.4,269.5 L885.6,269.5 L886.9,269.5 L888.1,269.5 L889.3,269.5 L890.5,269.5 L891.7,269.5 L892.9,269.5 L894.1,269.5 L895.4,269.5 L896.6,269.5 L897.8,269.5 L899,269.5 L900.2,269.5 L901.4,269.5 L902.6,269.5 L903.8,269.5 L905,269.5 L906.3,269.5 L907.5,269.5 L908.7,269.5 L909.9,269.5 L911.1,269.5 L912.3,269.5 L913.5,269.5 L914.8,269.5 L916,269.5 L917.2,269.5 L918.4,269.5 L919.6,269.5 L920.8,269.5 L922,269.5 L923.2,269.5 L924.5,269.5 L925.7,269.5 L926.9,269.5 L928.1,269.5 L929.3,269.5 L930.5,269.5 L931.7,269.5 L932.9,269.5 L934.1,269.5 L935.4,269.5 L936.6,269.5 L937.8,269.5 L939,269.5 L940.2,269.5 L941.4,269.5 L942.6,269.5 L943.9,269.5 L945.1,269.5 L946.3,269.5 L947.5,269.5 L948.7,269.5 L949.9,269.5 L951.1,269.5 L952.3,269.5 L953.5,269.5 L954.8,269.5 L956,269.5 L957.2,269.5 L958.4,269.5 L959.6,269.5 L960.8,269.5 L962,269.5 L963.2,269.5 L964.5,269.5 L965.7,269.5 L966.9,269.5 L968.1,269.5 L969.3,269.5 L970.5,269.5 L971.7,269.5 L973,269.5 L974.2,269.5 L975.4,269.5 L976.6,269.5 L977.8,269.5 L979,269.5 L980.2,269.5 L981.4,269.5 L982.6,269.5 L983.9,269.5 L985.1,269.5 L986.3,269.5 L987.5,269.5 L988.7,269.5 L989.9,269.5 L991.1,269.5 L992.4,269.5 L993.6,269.5 L994.8,269.5 L996,269.5 L997.2,269.5 L998.4,269.5 L999.6,269.5 L1000.8,269.5 L1002,269.5 L1003.3,269.5 L1004.5,269.5 L1005.7,269.5 L1006.9,269.5 L1008.1,269.5 L1009.3,269.5 L1010.5,269.5 L1011.8,269.5 L1013,269.5 L1014.2,269.5 L1015.4,269.5 L1016.6,269.5 L1017.8,269.5 L1019,269.5 L1020.2,269.5 L1021.5,269.5 L1022.7,269.5 L1023.9,269.5 L1025.1,269.5 L1026.3,269.5 L1027.5,269.5 L1028.7,269.5 L1029.9,269.5 L1031.2,269.5 L1032.4,269.5 L1033.6,269.5 L1034.8,269.5 L1036,269.5 L1037.2,269.5 L1038.4,269.5 L1039.6,269.5 L1040.8,269.5 L1042.1,269.5 L1043.3,269.5 L1044.5,269.5 L1045.7,269.5 L1046.9,269.5 L1048.1,269.5 L1049.3,269.5 L1050.5,269.5 L1051.8,269.5 L1053,269.5 L1054.2,269.5 L1055.4,269.5 L1056.6,269.5 L1057.8,269.5 L1059,269.5 L1060.2,269.5 L1061.5,269.5 L1062.7,269.5 L1063.9,269.5 L1065.1,269.5 L1066.3,269.5 L1067.5,269.5 L1068.7,269.5 L1070,269.5 L1071.2,269.5 L1072.4,269.5 L1073.6,269.5 L1074.8,269.5 L1076,269.5 L1077.2,269.5 L1078.4,269.5 L1079.7,269.5 L1080.9,269.5 L1082.1,269.5 L1083.3,269.5 L1084.5,269.5 L1085.7,269.5 L1086.9,269.5 L1088.1,269.5 L1089.3,269.5 L1090.6,269.5 L1091.8,269.5 L1093,269.5 L1094.2,269.5 L1095.4,269.5 L1096.6,269.5 L1097.8,269.5 L1099,269.5 L1100.3,269.5 L1101.5,269.5 L1102.7,269.5 L1103.9,269.5 L1105.1,269.5 L1106.3,269.5 L1107.5,269.5 L1108.8,269.5 L1110,269.5 L1111.2,269.5 L1112.4,269.5 L1113.6,269.5 L1114.8,269.5 L1116,269.5 L1117.2,269.5 L1118.5,269.5 L1119.7,269.5 L1120.9,269.5 L1122.1,269.5 L1123.3,269.5 L1124.5,269.5 L1125.7,269.5 L1126.9,269.5 L1128.2,269.5 L1129.4,269.5 L1130.6,269.5 L1131.8,269.5 L1133,269.5 L1134.2,269.5 L1135.4,269.5 L1136.6,269.5 L1137.8,269.5 L1139.1,269.5 L1140.3,269.5 L1141.5,269.5 L1142.7,269.5 L1143.9,269.5 L1145.1,269.5 L1146.3,269.5 L1147.5,269.5 L1148.8,269.5 L1150,269.5 L1151.2,269.5 L1152.4,269.5 L1153.6,269.5 L1154.8,269.5 L1156,269.5 L1157.2,269.5 L1158.5,269.5 L1159.7,269.5 L1160.9,269.5 L1162.1,269.5 L1163.3,269.5 L1164.5,269.5 L1165.7,269.5 L1167,269.5 L1168.2,269.5 L1169.4,269.5 L1170.6,269.5 L1171.8,269.5 L1173,269.5 L1174.2,269.5 L1175.4,269.5 L1176.7,269.5 L1177.9,269.5 L1179.1,269.5 L1180.3,269.5 L1181.5,269.5 L1182.7,269.5 L1183.9,269.5 L1185.1,269.5 L1186.3,269.5 L1187.6,269.5 L1188.8,269.5 L1190,269.5 L1191.2,269.5 L1192.4,269.5 L1193.6,269.5 L1194.8,269.5 L1196,269.5 L1197.3,269.5 L1198.5,269.5 L1199.7,269.5 L1200.9,269.5 L1202.1,269.5 L1203.3,269.5 L1204.5,269.5 L1205.8,269.5 L1207,269.5 L1208.2,269.5 L1209.4,269.5 L1210.6,269.5 L1211.8,269.5 L1213,269.5 L1214.2,269.5 L1215.5,269.5 L1216.7,269.5 L1217.9,269.5 L1219.1,269.5 L1220.3,269.5 L1221.5,269.5 L1222.7,269.5 L1223.9,269.5 L1225.2,269.5 L1226.4,269.5 L1227.6,269.5 L1228.8,269.5 L1230,269.5 L1231.2,269.5 L1232.4,269.5 L1233.6,269.5 L1234.8,269.5 L1236.1,269.5 L1237.3,269.5 L1238.5,269.5 L1239.7,269.5 L1240.9,269.5 L1242.1,269.5 L1243.3,269.5 L1244.5,269.5 L1245.8,269.5 L1247,269.5 L1248.2,269.5 L1249.4,269.5 L1250.6,269.5 L1251.8,269.5 L1253,269.5 L1254.2,269.5 L1255.5,269.5 L1256.7,269.5 L1257.9,269.5 L1259.1,269.5 L1260.3,269.5 L1261.5,269.5 L1262.7,269.5 L1264,269.5 L1265.2,269.5 L1266.4,269.5 L1267.6,269.5 L1268.8,269.5 L1270,269.5 L1271.2,269.5 L1272.4,269.5 L1273.7,269.5 L1274.9,269.5 L1276.1,269.5 L1277.3,269.5 L1278.5,269.5 L1279.7,269.5 L1280.9,269.5 L1282.1,269.5 L1283.3,269.5 L1284.6,269.5 L1285.8,269.5 L1287,269.5 L1288.2,269.5 L1289.4,269.5 L1290.6,269.5 L1291.8,269.5 L1293,269.5 L1294.3,269.5 L1295.5,269.5 L1296.7,269.5 L1297.9,269.5 L1299.1,269.5 L1300.3,269.5 L1301.5,269.5 L1302.8,269.5 L1304,269.5 L1305.2,269.5 L1306.4,269.5 L1307.6,269.5 L1308.8,269.5 L1310,271.4 L1311.2,272.4 L1312.5,272.4 L1313.7,272.4 L1314.9,272.4 L1316.1,272.4 L1317.3,271.4 L1318.5,270.8 L1319.7,270.8 L1320.9,270.8 L1322.2,270.8 L1323.4,270.8 L1324.6,270.8 L1325.8,270.8 L1327,270.8 L1328.2,270.8 L1329.4,270.8 L1330.6,270.8 L1331.8,270.8 L1333.1,270.8 L1334.3,270.8 L1335.5,270.8 L1336.7,270.8 L1337.9,270.8 L1339.1,270.8 L1340.3,270.8 L1341.5,270.8 L1342.8,270.8 L1344,270.8 L1345.2,270.8 L1346.4,270.8 L1347.6,270.8 L1348.8,270.8 L1350,270.8 L1351.2,270.8 L1352.5,270.8 L1353.7,270.8 L1354.9,270.8 L1356.1,270.8 L1357.3,270.8 L1358.5,270.8 L1359.7,279.2 L1360.9,279.2 L1362.2,274 L1363.4,274 L1364.6,274 L1365.8,274 L1367,271.4 L1368.2,271.4 L1369.4,271.4 L1370.7,271.4 L1371.9,271.4 L1373.1,271.4 L1374.3,271.4 L1375.5,271.4 L1376.7,271.4 L1377.9,274 L1379.1,274 L1380.3,274 L1381.6,274 L1382.8,274 L1384,295.4 L1385.2,333.6 L1386.4,340.5 L1387.6,327.8 L1388.8,329.9 L1390,319.2 L1391.3,331.5 L1392.5,276.4 L1393.7,278.5 L1394.9,277.5 L1396.1,276.4 L1397.3,348.6 L1398.5,348.4 L1399.8,344 L1401,347.5 L1402.2,336.9 L1403.4,329.9 L1404.6,345 L1405.8,322.6 L1407,335.7 L1408.2,327.2 L1409.5,342.4 L1410.7,294.5 L1411.9,313.9 L1413.1,299.6 L1414.3,340.9 L1415.5,331.2 L1416.7,342.8 L1417.9,301.2 L1419.2,309.1 L1420.4,338.2 L1421.6,309.9 L1422.8,344.8 L1424,296.7 L1425.2,309.5 L1426.4,297.2 L1427.6,305 L1428.8,331 L1430.1,334.6 L1431.3,325.6 L1432.5,300.7 L1433.7,322.5 L1434.9,325.5 L1436.1,339.5 L1437.3,312.6 L1438.6,289.7 L1439.8,308 L1441,334.7 L1442.2,317.2 L1443.4,315.8 L1444.6,330.1 L1445.8,342.7 L1447,301.7 L1448.2,339.2 L1449.5,342.8 L1450.7,300.2 L1451.9,323.6 L1453.1,315.5 L1454.3,315 L1455.5,333.9 L1456.7,317 L1457.9,287.5 L1459.2,297.2 L1460.4,307.1 L1461.6,337.1 L1462.8,335.6 L1464,327.5 L1465.2,325.1 L1466.4,297.8 L1467.7,337.8 L1468.9,354.2 L1470.1,318.5 L1471.3,334.4 L1472.5,330.4 L1473.7,352.2 L1474.9,353.7 L1476.1,337.3 L1477.3,323.2 L1478.6,325.9 L1479.8,322.3 L1481,334 L1482.2,340.6 L1483.4,348.9 L1484.6,321.4 L1485.8,344.8 L1487,351.6 L1488.3,331 L1489.5,318.8 L1490.7,311.1 L1491.9,349.5 L1493.1,310.1 L1494.3,348.3 L1495.5,316.1 L1496.8,308.7 L1498,318.5 L1499.2,300.3 L1500.4,354.2 L1501.6,344.4 L1502.8,316.4 L1504,314 L1505.2,344.2 L1506.5,309.7 L1507.7,322.9 L1508.9,305.4 L1510.1,284.6 L1511.3,319.7 L1512.5,308.6 L1513.7,301 L1514.9,328.9 L1516.2,328.7 L1517.4,306.8 L1518.6,318 L1519.8,304.6 L1521,328.7 L1522.2,324.6 L1523.4,338.4 L1524.6,305.5 L1525.8,290.5 L1527.1,304.7 L1528.3,271.8 L1529.5,271.8 L1530.7,271.8 L1531.9,271.8 L1533.1,301.8 L1534.3,317.4 L1535.5,335.6 L1536.8,299.4 L1538,379.4 L1539.2,356.8 L1540.4,327 L1541.6,296.3 L1542.8,308.2 L1544,295.4 L1545.2,295.4 L1546.5,308.5 L1547.7,295.4 L1548.9,306.8 L1550.1,336.6 L1551.3,315.8 L1552.5,336.5 L1553.7,317.5 L1555,316.6 L1556.2,316.8 L1557.4,309.2 L1558.6,336.2 L1559.8,336.1 L1561,315.1 L1562.2,334.5 L1563.4,289.8 L1564.7,293.3 L1565.9,281.5 L1567.1,281.2 L1568.3,283.2 L1569.5,284.2 L1570.7,292.4 L1571.9,277.9 L1573.1,298.2 L1574.3,313.7 L1575.6,295.1 L1576.8,310.4 L1578,318.4 L1579.2,318 L1580.4,295.1 L1581.6,309.8 L1582.8,311.3 L1584.1,308.7 L1585.3,299.8 L1586.5,289 L1587.7,290.1 L1588.9,296.2 L1590.1,296.5 L1591.3,287.9 L1592.5,308.9 L1593.8,353.6 L1595,353.6 L1596.2,285.6 L1597.4,280.8 L1598.6,289.7 L1599.8,280.1 L1601,275.3 L1602.2,285.4 L1603.4,285.4 L1604.7,284.6 L1605.9,284.2 L1607.1,280.7 L1608.3,289.3 L1609.5,284.7 L1610.7,294.8 L1611.9,291.2 L1613.2,295 L1614.4,280.4 L1615.6,291.7 L1616.8,289.6 L1618,292.5 L1619.2,295.3 L1620.4,292.1 L1621.6,290.7 L1622.8,287.4 L1624.1,296.6 L1625.3,290.4 L1626.5,288.9 L1627.7,287.8 L1628.9,286.5 L1630.1,300.2 L1631.3,294.8 L1632.5,293.6 L1633.8,301.4 L1635,281 L1636.2,290.9 L1637.4,285.5 L1638.6,283.9 L1639.8,285.8 L1641,292.9 L1642.2,305.7 L1643.5,305.7 L1644.7,282.4 L1645.9,271.4 L1647.1,271.4 L1648.3,271.4 L1649.5,271.4 L1650.7,271.4 L1652,277.9 L1653.2,277.9 L1654.4,272.1 L1655.6,272.1" fill="none" stroke="#ef843c" stroke-width="1.1" stroke-linejoin="round"/></svg>
<div class="t ax" style="right:915.3px;top:198.5px;">10 kB</div>
<div class="t ax" style="right:915.3px;top:230.8px;">5 kB</div>
<div class="t ax" style="right:915.3px;top:263.2px;">0 B</div>
<div class="t ax" style="right:915.3px;top:295.5px;">-5 kB</div>
<div class="t ax" style="right:915.3px;top:327.9px;">-10 kB</div>
<div class="t ax" style="right:915.3px;top:360.2px;">-15 kB</div>
<div class="t ax" style="right:915.3px;top:392.5px;">-20 kB</div>
<div class="t ax c" style="left:593.5px;width:400px;top:406px;">07:30</div>
<div class="t ax c" style="left:666.2px;width:400px;top:406px;">08:00</div>
<div class="t ax c" style="left:739px;width:400px;top:406px;">08:30</div>
<div class="t ax c" style="left:811.8px;width:400px;top:406px;">09:00</div>
<div class="t ax c" style="left:884.5px;width:400px;top:406px;">09:30</div>
<div class="t ax c" style="left:957.2px;width:400px;top:406px;">10:00</div>
<div class="t ax c" style="left:1030px;width:400px;top:406px;">10:30</div>
<div class="t ax c" style="left:1102.8px;width:400px;top:406px;">11:00</div>
<div class="t ax c" style="left:1175.5px;width:400px;top:406px;">11:30</div>
<div class="t ax c" style="left:1248.2px;width:400px;top:406px;">12:00</div>
<div class="t ax c" style="left:1321px;width:400px;top:406px;">12:30</div>
<div class="t ax c" style="left:1393.8px;width:400px;top:406px;">13:00</div>
<div class="t ax yl" style="left:623.2px;top:303px;width:200px">Bytes per second</div>
<div class="t lh" style="right:118px;top:428.8px;">min</div>
<div class="t lh" style="right:48px;top:428.8px;">avg</div>
<div class="li" style="left:737px;top:456px;background:#6ed0e0"></div>
<div class="t lg" style="left:757.5px;top:448.9px;letter-spacing:0.3px">Outgoing Traffic</div>
<div class="t lg" style="right:118px;top:448.9px;">0 B</div>
<div class="t lg" style="right:48px;top:448.9px;">1.15 kB</div>
<div class="stripe" style="left:737px;top:466px;width:919px"></div>
<div class="li" style="left:737px;top:477px;background:#ef843c"></div>
<div class="t lg" style="left:757.5px;top:469.9px;letter-spacing:0.282px">Incoming Traffic</div>
<div class="t lg" style="right:118px;top:469.9px;">-17.00 kB</div>
<div class="t lg" style="right:48px;top:469.9px;">-2.05 kB</div>
<div class="rh" style="top:512px"><i></i><i></i><i></i></div>
<div class="panel" style="left:11px;top:506px;width:830px;height:373px"><i class="rz"></i></div>
<div class="t pt c" style="left:226.6px;width:400px;top:512px;">Traffic Usage by Type</div>
<svg class="abs" style="left:0;top:0" width="1694" height="897" viewBox="0 0 1694 897"><path d="M95.2,541.5 H815 M95.2,567.5 H815 M95.2,594.5 H815 M95.2,620.5 H815 M95.2,647.5 H815 M95.2,673.5 H815 M95.2,699.5 H815" stroke="#c8c8c8" stroke-opacity="0.18" stroke-width="1" fill="none" shape-rendering="crispEdges"/><path d="M103.5,541.5 V700 M163.5,541.5 V700 M223.5,541.5 V700 M283.5,541.5 V700 M343.5,541.5 V700 M403.5,541.5 V700 M463.5,541.5 V700 M523.5,541.5 V700 M583.5,541.5 V700 M643.5,541.5 V700 M703.5,541.5 V700 M763.5,541.5 V700" stroke="#c8c8c8" stroke-opacity="0.18" stroke-width="1" fill="none" shape-rendering="crispEdges"/><path d="M95.2,593.9 L96.7,593.9 L98.2,593.9 L99.7,593.9 L101.2,593.9 L102.7,593.9 L104.2,593.9 L105.7,593.9 L107.2,593.9 L108.7,593.9 L110.2,593.9 L111.7,593.9 L113.2,593.9 L114.7,593.9 L116.2,593.9 L117.7,593.9 L119.2,593.9 L120.7,593.9 L122.2,593.9 L123.7,593.9 L125.2,593.9 L126.7,593.9 L128.2,593.9 L129.7,593.9 L131.2,593.9 L132.7,593.9 L134.2,593.9 L135.7,593.9 L137.2,593.9 L138.7,593.9 L140.2,593.9 L141.7,593.9 L143.2,593.9 L144.7,593.9 L146.2,593.9 L147.7,593.9 L149.2,593.9 L150.7,593.9 L152.2,593.9 L153.7,593.9 L155.2,593.9 L156.7,593.9 L158.2,593.9 L159.7,593.9 L161.2,593.9 L162.7,593.9 L164.2,593.9 L165.7,593.9 L167.2,593.9 L168.7,593.9 L170.2,593.9 L171.7,593.9 L173.2,593.9 L174.7,593.9 L176.2,593.9 L177.7,593.9 L179.2,593.9 L180.7,593.9 L182.2,593.9 L183.7,593.9 L185.2,593.9 L186.7,593.9 L188.2,593.9 L189.7,593.9 L191.2,593.9 L192.7,593.9 L194.2,593.9 L195.7,593.9 L197.2,593.9 L198.7,593.9 L200.2,593.9 L201.7,593.9 L203.2,593.9 L204.7,593.9 L206.2,593.9 L207.7,593.9 L209.2,593.9 L210.7,593.9 L212.2,593.9 L213.7,593.9 L215.2,593.9 L216.7,593.9 L218.2,593.9 L219.7,593.9 L221.2,593.9 L222.7,593.9 L224.2,593.9 L225.7,593.9 L227.2,593.9 L228.7,593.9 L230.2,593.9 L231.7,593.9 L233.2,593.9 L234.7,593.9 L236.2,593.9 L237.7,593.9 L239.2,593.9 L240.7,593.9 L242.2,593.9 L243.7,593.9 L245.2,593.9 L246.7,593.9 L248.2,593.9 L249.7,593.9 L251.2,593.9 L252.7,593.9 L254.2,593.9 L255.7,593.9 L257.2,593.9 L258.7,593.9 L260.2,593.9 L261.7,593.9 L263.2,593.9 L264.7,593.9 L266.2,593.9 L267.7,593.9 L269.2,593.9 L270.7,593.9 L272.2,593.9 L273.7,593.9 L275.2,593.9 L276.7,593.9 L278.2,593.9 L279.7,593.9 L281.2,593.9 L282.7,593.9 L284.2,593.9 L285.7,593.9 L287.2,593.9 L288.7,593.9 L290.2,593.9 L291.7,593.9 L293.2,593.9 L294.7,593.9 L296.2,593.9 L297.7,593.9 L299.2,593.9 L300.7,593.9 L302.2,593.9 L303.7,593.9 L305.2,593.9 L306.7,593.9 L308.2,593.9 L309.7,593.9 L311.2,593.9 L312.7,593.9 L314.2,593.9 L315.7,593.9 L317.2,593.9 L318.7,593.9 L320.2,593.9 L321.7,593.9 L323.2,593.9 L324.7,593.9 L326.2,593.9 L327.7,593.9 L329.2,593.9 L330.7,593.9 L332.2,593.9 L333.7,593.9 L335.2,593.9 L336.7,593.9 L338.2,593.9 L339.7,593.9 L341.2,593.9 L342.7,593.9 L344.2,593.9 L345.7,593.9 L347.2,593.9 L348.7,593.9 L350.2,593.9 L351.7,593.9 L353.2,593.9 L354.7,593.9 L356.2,593.9 L357.7,593.9 L359.2,593.9 L360.7,593.9 L362.2,593.9 L363.7,593.9 L365.2,593.9 L366.7,593.9 L368.2,593.9 L369.7,593.9 L371.2,593.9 L372.7,593.9 L374.2,593.9 L375.7,593.9 L377.2,593.9 L378.7,593.9 L380.2,593.9 L381.7,593.9 L383.2,593.9 L384.7,593.9 L386.2,593.9 L387.7,593.9 L389.2,593.9 L390.7,593.9 L392.2,593.9 L393.7,593.9 L395.2,593.9 L396.7,593.9 L398.2,593.9 L399.7,593.9 L401.2,593.9 L402.7,593.9 L404.2,593.9 L405.7,593.9 L407.2,593.9 L408.7,593.9 L410.2,593.9 L411.7,593.9 L413.2,593.9 L414.7,593.9 L416.2,593.9 L417.7,593.9 L419.2,593.9 L420.7,593.9 L422.2,593.9 L423.7,593.9 L425.2,593.9 L426.7,593.9 L428.2,593.9 L429.7,593.9 L431.2,593.9 L432.7,593.9 L434.2,593.9 L435.7,593.9 L437.2,593.9 L438.7,593.9 L440.2,593.9 L441.7,593.9 L443.2,593.9 L444.7,593.9 L446.2,593.9 L447.7,593.9 L449.2,593.9 L450.7,593.9 L452.2,593.9 L453.7,593.9 L455.2,593.9 L456.7,593.9 L458.2,593.9 L459.7,593.9 L461.2,593.9 L462.7,593.9 L464.2,593.9 L465.7,593.9 L467.2,593.9 L468.7,593.9 L470.2,593.9 L471.7,593.9 L473.2,593.9 L474.7,593.9 L476.2,593.9 L477.7,593.9 L479.2,593.9 L480.7,593.9 L482.2,593.9 L483.7,593.9 L485.2,593.9 L486.7,593.9 L488.2,593.9 L489.7,593.9 L491.2,593.9 L492.7,593.9 L494.2,593.9 L495.7,593.9 L497.2,593.9 L498.7,593.9 L500.2,593.9 L501.7,593.9 L503.2,593.9 L504.7,593.9 L506.2,593.9 L507.7,593.9 L509.2,593.9 L510.7,593.9 L512.2,593.9 L513.7,593.9 L515.2,593.9 L516.7,593.9 L518.2,593.9 L519.7,593.9 L521.2,593.9 L522.7,593.9 L524.2,593.9 L525.7,593.9 L527.2,593.9 L528.7,593.9 L530.2,579.2 L531.7,566.9 L533.2,566.9 L534.7,566.9 L536.2,584.1 L537.7,593.2 L539.2,593.2 L540.7,593.2 L542.2,593.2 L543.7,593.2 L545.2,593.2 L546.7,593.2 L548.2,593.2 L549.7,593.2 L551.2,593.2 L552.7,593.2 L554.2,593.2 L555.7,593.2 L557.2,593.2 L558.7,593.2 L560.2,593.2 L561.7,593.2 L563.2,593.2 L564.7,593.2 L566.2,593.2 L567.7,593.2 L569.2,593.2 L570.7,588 L572.2,588 L573.7,591.7 L575.2,591.7 L576.7,593.2 L578.2,593.2 L579.7,593.2 L581.2,593.2 L582.7,593.2 L584.2,593.2 L585.7,592.4 L587.2,592.4 L588.7,592.4 L590.2,592.4 L591.7,569.6 L593.2,568.1 L594.7,569.8 L596.2,567.2 L597.7,587.6 L599.2,587.5 L600.7,587.5 L602.2,577.3 L603.7,579.5 L605.2,570 L606.7,569.1 L608.2,569.2 L609.7,569.4 L611.2,565.4 L612.7,566.8 L614.2,570 L615.7,570 L617.2,570.4 L618.7,567.7 L620.2,575.4 L621.7,580.7 L623.2,581.5 L624.7,581.9 L626.2,582 L627.7,570.4 L629.2,573.3 L630.7,568.4 L632.2,565.1 L633.7,568.2 L635.2,577.7 L636.7,568.8 L638.2,582.1 L639.7,578.9 L641.2,582.6 L642.7,582 L644.2,582.6 L645.7,571.2 L647.2,565.4 L648.7,568.4 L650.2,569.8 L651.7,578 L653.2,582.6 L654.7,571.5 L656.2,569 L657.7,579.4 L659.2,580.5 L660.7,575.1 L662.2,568.1 L663.7,577.3 L665.2,582.6 L666.7,567.5 L668.2,576 L669.7,566.8 L671.2,575.3 L672.7,567.8 L674.2,571.3 L675.7,567.3 L677.2,569.2 L678.7,568.6 L680.2,563.5 L681.7,566.2 L683.2,573.9 L684.7,577.2 L686.2,574 L687.7,574 L689.2,572.1 L690.7,574.9 L692.2,568.4 L693.7,572.3 L695.2,577.3 L696.7,572 L698.2,582.6 L699.7,582.6 L701.2,573.8 L702.7,572.6 L704.2,575.9 L705.7,575.9 L707.2,571.3 L708.7,579.2 L710.2,592.9 L711.7,592.9 L713.2,579.2 L714.7,561.7 L716.2,578.8 L717.7,552.7 L719.2,559.5 L720.7,558.5 L722.2,570.1 L723.7,566.8 L725.2,574.4 L726.7,575.5 L728.2,576.1 L729.7,573.1 L731.2,570.8 L732.7,583.1 L734.2,579.9 L735.7,577 L737.2,583.1 L738.7,573.4 L740.2,577.4 L741.7,583.1 L743.2,582.7 L744.7,579.8 L746.2,583.1 L747.7,575.9 L749.2,573.1 L750.7,575.1 L752.2,574.8 L753.7,575.8 L755.2,583.1 L756.7,577.3 L758.2,586 L759.7,585.2 L761.2,586.5 L762.7,583.7 L764.2,558.5 L765.7,578 L767.2,584.7 L768.7,586 L770.2,585.4 L771.7,587.5 L773.2,586 L774.7,587.5 L776.2,578.4 L777.7,586.3 L779.2,587.5 L780.7,576.4 L782.2,574.7 L783.7,577.3 L785.2,578.5 L786.7,575 L788.2,578.2 L789.7,586.1 L791.2,582.6 L792.7,573.9 L794.2,586.6 L795.7,581.9 L797.2,585.3 L798.7,575.8 L800.2,580.9 L801.7,576.8 L803.2,576.8 L804.7,565.4 L806.2,579.2 L807.7,592.9 L809.2,592.9 L810.7,592.9 L812.2,588.5 L813.7,592.4 L813.7,593.9 L95.2,593.9 Z" fill="#6ed0e0" fill-opacity="0.5"/><path d="M95.2,593.9 L96.7,593.9 L98.2,593.9 L99.7,593.9 L101.2,593.9 L102.7,593.9 L104.2,593.9 L105.7,593.9 L107.2,593.9 L108.7,593.9 L110.2,593.9 L111.7,593.9 L113.2,593.9 L114.7,593.9 L116.2,593.9 L117.7,593.9 L119.2,593.9 L120.7,593.9 L122.2,593.9 L123.7,593.9 L125.2,593.9 L126.7,593.9 L128.2,593.9 L129.7,593.9 L131.2,593.9 L132.7,593.9 L134.2,593.9 L135.7,593.9 L137.2,593.9 L138.7,593.9 L140.2,593.9 L141.7,593.9 L143.2,593.9 L144.7,593.9 L146.2,593.9 L147.7,593.9 L149.2,593.9 L150.7,593.9 L152.2,593.9 L153.7,593.9 L155.2,593.9 L156.7,593.9 L158.2,593.9 L159.7,593.9 L161.2,593.9 L162.7,593.9 L164.2,593.9 L165.7,593.9 L167.2,593.9 L168.7,593.9 L170.2,593.9 L171.7,593.9 L173.2,593.9 L174.7,593.9 L176.2,593.9 L177.7,593.9 L179.2,593.9 L180.7,593.9 L182.2,593.9 L183.7,593.9 L185.2,593.9 L186.7,593.9 L188.2,593.9 L189.7,593.9 L191.2,593.9 L192.7,593.9 L194.2,593.9 L195.7,593.9 L197.2,593.9 L198.7,593.9 L200.2,593.9 L201.7,593.9 L203.2,593.9 L204.7,593.9 L206.2,593.9 L207.7,593.9 L209.2,593.9 L210.7,593.9 L212.2,593.9 L213.7,593.9 L215.2,593.9 L216.7,593.9 L218.2,593.9 L219.7,593.9 L221.2,593.9 L222.7,593.9 L224.2,593.9 L225.7,593.9 L227.2,593.9 L228.7,593.9 L230.2,593.9 L231.7,593.9 L233.2,593.9 L234.7,593.9 L236.2,593.9 L237.7,593.9 L239.2,593.9 L240.7,593.9 L242.2,593.9 L243.7,593.9 L245.2,593.9 L246.7,593.9 L248.2,593.9 L249.7,593.9 L251.2,593.9 L252.7,593.9 L254.2,593.9 L255.7,593.9 L257.2,593.9 L258.7,593.9 L260.2,593.9 L261.7,593.9 L263.2,593.9 L264.7,593.9 L266.2,593.9 L267.7,593.9 L269.2,593.9 L270.7,593.9 L272.2,593.9 L273.7,593.9 L275.2,593.9 L276.7,593.9 L278.2,593.9 L279.7,593.9 L281.2,593.9 L282.7,593.9 L284.2,593.9 L285.7,593.9 L287.2,593.9 L288.7,593.9 L290.2,593.9 L291.7,593.9 L293.2,593.9 L294.7,593.9 L296.2,593.9 L297.7,593.9 L299.2,593.9 L300.7,593.9 L302.2,593.9 L303.7,593.9 L305.2,593.9 L306.7,593.9 L308.2,593.9 L309.7,593.9 L311.2,593.9 L312.7,593.9 L314.2,593.9 L315.7,593.9 L317.2,593.9 L318.7,593.9 L320.2,593.9 L321.7,593.9 L323.2,593.9 L324.7,593.9 L326.2,593.9 L327.7,593.9 L329.2,593.9 L330.7,593.9 L332.2,593.9 L333.7,593.9 L335.2,593.9 L336.7,593.9 L338.2,593.9 L339.7,593.9 L341.2,593.9 L342.7,593.9 L344.2,593.9 L345.7,593.9 L347.2,593.9 L348.7,593.9 L350.2,593.9 L351.7,593.9 L353.2,593.9 L354.7,593.9 L356.2,593.9 L357.7,593.9 L359.2,593.9 L360.7,593.9 L362.2,593.9 L363.7,593.9 L365.2,593.9 L366.7,593.9 L368.2,593.9 L369.7,593.9 L371.2,593.9 L372.7,593.9 L374.2,593.9 L375.7,593.9 L377.2,593.9 L378.7,593.9 L380.2,593.9 L381.7,593.9 L383.2,593.9 L384.7,593.9 L386.2,593.9 L387.7,593.9 L389.2,593.9 L390.7,593.9 L392.2,593.9 L393.7,593.9 L395.2,593.9 L396.7,593.9 L398.2,593.9 L399.7,593.9 L401.2,593.9 L402.7,593.9 L404.2,593.9 L405.7,593.9 L407.2,593.9 L408.7,593.9 L410.2,593.9 L411.7,593.9 L413.2,593.9 L414.7,593.9 L416.2,593.9 L417.7,593.9 L419.2,593.9 L420.7,593.9 L422.2,593.9 L423.7,593.9 L425.2,593.9 L426.7,593.9 L428.2,593.9 L429.7,593.9 L431.2,593.9 L432.7,593.9 L434.2,593.9 L435.7,593.9 L437.2,593.9 L438.7,593.9 L440.2,593.9 L441.7,593.9 L443.2,593.9 L444.7,593.9 L446.2,593.9 L447.7,593.9 L449.2,593.9 L450.7,593.9 L452.2,593.9 L453.7,593.9 L455.2,593.9 L456.7,593.9 L458.2,593.9 L459.7,593.9 L461.2,593.9 L462.7,593.9 L464.2,593.9 L465.7,593.9 L467.2,593.9 L468.7,593.9 L470.2,593.9 L471.7,593.9 L473.2,593.9 L474.7,593.9 L476.2,593.9 L477.7,593.9 L479.2,593.9 L480.7,593.9 L482.2,593.9 L483.7,593.9 L485.2,593.9 L486.7,593.9 L488.2,593.9 L489.7,593.9 L491.2,593.9 L492.7,593.9 L494.2,593.9 L495.7,593.9 L497.2,593.9 L498.7,593.9 L500.2,593.9 L501.7,593.9 L503.2,593.9 L504.7,593.9 L506.2,593.9 L507.7,593.9 L509.2,593.9 L510.7,593.9 L512.2,593.9 L513.7,593.9 L515.2,593.9 L516.7,593.9 L518.2,593.9 L519.7,593.9 L521.2,593.9 L522.7,593.9 L524.2,593.9 L525.7,593.9 L527.2,593.9 L528.7,593.9 L530.2,595.4 L531.7,596.1 L533.2,596.1 L534.7,596.1 L536.2,595.4 L537.7,594.9 L539.2,594.9 L540.7,594.9 L542.2,594.9 L543.7,594.9 L545.2,594.9 L546.7,594.9 L548.2,594.9 L549.7,594.9 L551.2,594.9 L552.7,594.9 L554.2,594.9 L555.7,594.9 L557.2,594.9 L558.7,594.9 L560.2,594.9 L561.7,594.9 L563.2,594.9 L564.7,594.9 L566.2,594.9 L567.7,594.9 L569.2,594.9 L570.7,601.3 L572.2,601.3 L573.7,597.3 L575.2,597.3 L576.7,595.4 L578.2,595.4 L579.7,595.4 L581.2,595.4 L582.7,595.4 L584.2,595.4 L585.7,597.3 L587.2,597.3 L588.7,597.3 L590.2,597.3 L591.7,640.3 L593.2,643.8 L594.7,632 L596.2,646.1 L597.7,603.5 L599.2,598.9 L600.7,601.9 L602.2,619.8 L603.7,643.7 L605.2,645.5 L606.7,640.2 L608.2,645.6 L609.7,639.2 L611.2,637.2 L612.7,635.1 L614.2,639.8 L615.7,626.9 L617.2,634.1 L618.7,640.9 L620.2,654.5 L621.7,615 L623.2,643 L624.7,643.3 L626.2,626.1 L627.7,615 L629.2,652.7 L630.7,630.3 L632.2,636.7 L633.7,630.4 L635.2,645.4 L636.7,643.7 L638.2,631 L639.7,623.5 L641.2,645.4 L642.7,634.2 L644.2,647.8 L645.7,622.9 L647.2,655.8 L648.7,653.2 L650.2,622.3 L651.7,631.3 L653.2,647 L654.7,636.3 L656.2,631.2 L657.7,622.4 L659.2,651.4 L660.7,647 L662.2,641 L663.7,651.5 L665.2,629.9 L666.7,642 L668.2,651.3 L669.7,650.2 L671.2,647.9 L672.7,654.5 L674.2,655.8 L675.7,630.2 L677.2,628.4 L678.7,632.1 L680.2,632.9 L681.7,652.5 L683.2,642.3 L684.7,636.9 L686.2,649.7 L687.7,628.2 L689.2,642.3 L690.7,639.6 L692.2,646.6 L693.7,640.4 L695.2,636.7 L696.7,635 L698.2,625.5 L699.7,615 L701.2,632.9 L702.7,626.6 L704.2,634.8 L705.7,624.8 L707.2,645.1 L708.7,615.7 L710.2,595.6 L711.7,595.6 L713.2,618.5 L714.7,649.6 L716.2,621.6 L717.7,677.4 L719.2,660.2 L720.7,641.5 L722.2,653.9 L723.7,636.6 L725.2,653.3 L726.7,627.1 L728.2,615.6 L729.7,617.1 L731.2,632.3 L732.7,634.4 L734.2,625 L735.7,626.9 L737.2,647.2 L738.7,603.7 L740.2,608.9 L741.7,607.8 L743.2,603.8 L744.7,607.1 L746.2,637.5 L747.7,616.7 L749.2,616.6 L750.7,617 L752.2,623.8 L753.7,613.7 L755.2,619 L756.7,635.4 L758.2,621.3 L759.7,608.8 L761.2,606.3 L762.7,615.9 L764.2,657.7 L765.7,605 L767.2,606.3 L768.7,601.8 L770.2,614.8 L771.7,608.3 L773.2,613.3 L774.7,609.5 L776.2,608.3 L777.7,616.5 L779.2,616.7 L780.7,616.6 L782.2,609.4 L783.7,610.5 L785.2,608 L786.7,608.2 L788.2,603.5 L789.7,616.6 L791.2,608.3 L792.7,614.2 L794.2,611.4 L795.7,612.3 L797.2,606.4 L798.7,611.7 L800.2,613.2 L801.7,605.1 L803.2,608.5 L804.7,621.4 L806.2,603.7 L807.7,595.4 L809.2,595.4 L810.7,595.4 L812.2,600.3 L813.7,595.9 L813.7,593.9 L95.2,593.9 Z" fill="#1f78c1" fill-opacity="0.5"/><path d="M95.2,593.9 L96.7,593.9 L98.2,593.9 L99.7,593.9 L101.2,593.9 L102.7,593.9 L104.2,593.9 L105.7,593.9 L107.2,593.9 L108.7,593.9 L110.2,593.9 L111.7,593.9 L113.2,593.9 L114.7,593.9 L116.2,593.9 L117.7,593.9 L119.2,593.9 L120.7,593.9 L122.2,593.9 L123.7,593.9 L125.2,593.9 L126.7,593.9 L128.2,593.9 L129.7,593.9 L131.2,593.9 L132.7,593.9 L134.2,593.9 L135.7,593.9 L137.2,593.9 L138.7,593.9 L140.2,593.9 L141.7,593.9 L143.2,593.9 L144.7,593.9 L146.2,593.9 L147.7,593.9 L149.2,593.9 L150.7,593.9 L152.2,593.9 L153.7,593.9 L155.2,593.9 L156.7,593.9 L158.2,593.9 L159.7,593.9 L161.2,593.9 L162.7,593.9 L164.2,593.9 L165.7,593.9 L167.2,593.9 L168.7,593.9 L170.2,593.9 L171.7,593.9 L173.2,593.9 L174.7,593.9 L176.2,593.9 L177.7,593.9 L179.2,593.9 L180.7,593.9 L182.2,593.9 L183.7,593.9 L185.2,593.9 L186.7,593.9 L188.2,593.9 L189.7,593.9 L191.2,593.9 L192.7,593.9 L194.2,593.9 L195.7,593.9 L197.2,593.9 L198.7,593.9 L200.2,593.9 L201.7,593.9 L203.2,593.9 L204.7,593.9 L206.2,593.9 L207.7,593.9 L209.2,593.9 L210.7,593.9 L212.2,593.9 L213.7,593.9 L215.2,593.9 L216.7,593.9 L218.2,593.9 L219.7,593.9 L221.2,593.9 L222.7,593.9 L224.2,593.9 L225.7,593.9 L227.2,593.9 L228.7,593.9 L230.2,593.9 L231.7,593.9 L233.2,593.9 L234.7,593.9 L236.2,593.9 L237.7,593.9 L239.2,593.9 L240.7,593.9 L242.2,593.9 L243.7,593.9 L245.2,593.9 L246.7,593.9 L248.2,593.9 L249.7,593.9 L251.2,593.9 L252.7,593.9 L254.2,593.9 L255.7,593.9 L257.2,593.9 L258.7,593.9 L260.2,593.9 L261.7,593.9 L263.2,593.9 L264.7,593.9 L266.2,593.9 L267.7,593.9 L269.2,593.9 L270.7,593.9 L272.2,593.9 L273.7,593.9 L275.2,593.9 L276.7,593.9 L278.2,593.9 L279.7,593.9 L281.2,593.9 L282.7,593.9 L284.2,593.9 L285.7,593.9 L287.2,593.9 L288.7,593.9 L290.2,593.9 L291.7,593.9 L293.2,593.9 L294.7,593.9 L296.2,593.9 L297.7,593.9 L299.2,593.9 L300.7,593.9 L302.2,593.9 L303.7,593.9 L305.2,593.9 L306.7,593.9 L308.2,593.9 L309.7,593.9 L311.2,593.9 L312.7,593.9 L314.2,593.9 L315.7,593.9 L317.2,593.9 L318.7,593.9 L320.2,593.9 L321.7,593.9 L323.2,593.9 L324.7,593.9 L326.2,593.9 L327.7,593.9 L329.2,593.9 L330.7,593.9 L332.2,593.9 L333.7,593.9 L335.2,593.9 L336.7,593.9 L338.2,593.9 L339.7,593.9 L341.2,593.9 L342.7,593.9 L344.2,593.9 L345.7,593.9 L347.2,593.9 L348.7,593.9 L350.2,593.9 L351.7,593.9 L353.2,593.9 L354.7,593.9 L356.2,593.9 L357.7,593.9 L359.2,593.9 L360.7,593.9 L362.2,593.9 L363.7,593.9 L365.2,593.9 L366.7,593.9 L368.2,593.9 L369.7,593.9 L371.2,593.9 L372.7,593.9 L374.2,593.9 L375.7,593.9 L377.2,593.9 L378.7,593.9 L380.2,593.9 L381.7,593.9 L383.2,593.9 L384.7,593.9 L386.2,593.9 L387.7,593.9 L389.2,593.9 L390.7,593.9 L392.2,593.9 L393.7,593.9 L395.2,593.9 L396.7,593.9 L398.2,593.9 L399.7,593.9 L401.2,593.9 L402.7,593.9 L404.2,593.9 L405.7,593.9 L407.2,593.9 L408.7,593.9 L410.2,593.9 L411.7,593.9 L413.2,593.9 L414.7,593.9 L416.2,593.9 L417.7,593.9 L419.2,593.9 L420.7,593.9 L422.2,593.9 L423.7,593.9 L425.2,593.9 L426.7,593.9 L428.2,593.9 L429.7,593.9 L431.2,593.9 L432.7,593.9 L434.2,593.9 L435.7,593.9 L437.2,593.9 L438.7,593.9 L440.2,593.9 L441.7,593.9 L443.2,593.9 L444.7,593.9 L446.2,593.9 L447.7,593.9 L449.2,593.9 L450.7,593.9 L452.2,593.9 L453.7,593.9 L455.2,593.9 L456.7,593.9 L458.2,593.9 L459.7,593.9 L461.2,593.9 L462.7,593.9 L464.2,593.9 L465.7,593.9 L467.2,593.9 L468.7,593.9 L470.2,593.9 L471.7,593.9 L473.2,593.9 L474.7,593.9 L476.2,593.9 L477.7,593.9 L479.2,593.9 L480.7,593.9 L482.2,593.9 L483.7,593.9 L485.2,593.9 L486.7,593.9 L488.2,593.9 L489.7,593.9 L491.2,593.9 L492.7,593.9 L494.2,593.9 L495.7,593.9 L497.2,593.9 L498.7,593.9 L500.2,593.9 L501.7,593.9 L503.2,593.9 L504.7,593.9 L506.2,593.9 L507.7,593.9 L509.2,593.9 L510.7,593.9 L512.2,593.9 L513.7,593.9 L515.2,593.9 L516.7,593.9 L518.2,593.9 L519.7,593.9 L521.2,593.9 L522.7,593.9 L524.2,593.9 L525.7,593.9 L527.2,593.9 L528.7,593.9 L530.2,579.2 L531.7,566.9 L533.2,566.9 L534.7,566.9 L536.2,584.1 L537.7,593.2 L539.2,593.2 L540.7,593.2 L542.2,593.2 L543.7,593.2 L545.2,593.2 L546.7,593.2 L548.2,593.2 L549.7,593.2 L551.2,593.2 L552.7,593.2 L554.2,593.2 L555.7,593.2 L557.2,593.2 L558.7,593.2 L560.2,593.2 L561.7,593.2 L563.2,593.2 L564.7,593.2 L566.2,593.2 L567.7,593.2 L569.2,593.2 L570.7,588 L572.2,588 L573.7,591.7 L575.2,591.7 L576.7,593.2 L578.2,593.2 L579.7,593.2 L581.2,593.2 L582.7,593.2 L584.2,593.2 L585.7,592.4 L587.2,592.4 L588.7,592.4 L590.2,592.4 L591.7,569.6 L593.2,568.1 L594.7,569.8 L596.2,567.2 L597.7,587.6 L599.2,587.5 L600.7,587.5 L602.2,577.3 L603.7,579.5 L605.2,570 L606.7,569.1 L608.2,569.2 L609.7,569.4 L611.2,565.4 L612.7,566.8 L614.2,570 L615.7,570 L617.2,570.4 L618.7,567.7 L620.2,575.4 L621.7,580.7 L623.2,581.5 L624.7,581.9 L626.2,582 L627.7,570.4 L629.2,573.3 L630.7,568.4 L632.2,565.1 L633.7,568.2 L635.2,577.7 L636.7,568.8 L638.2,582.1 L639.7,578.9 L641.2,582.6 L642.7,582 L644.2,582.6 L645.7,571.2 L647.2,565.4 L648.7,568.4 L650.2,569.8 L651.7,578 L653.2,582.6 L654.7,571.5 L656.2,569 L657.7,579.4 L659.2,580.5 L660.7,575.1 L662.2,568.1 L663.7,577.3 L665.2,582.6 L666.7,567.5 L668.2,576 L669.7,566.8 L671.2,575.3 L672.7,567.8 L674.2,571.3 L675.7,567.3 L677.2,569.2 L678.7,568.6 L680.2,563.5 L681.7,566.2 L683.2,573.9 L684.7,577.2 L686.2,574 L687.7,574 L689.2,572.1 L690.7,574.9 L692.2,568.4 L693.7,572.3 L695.2,577.3 L696.7,572 L698.2,582.6 L699.7,582.6 L701.2,573.8 L702.7,572.6 L704.2,575.9 L705.7,575.9 L707.2,571.3 L708.7,579.2 L710.2,592.9 L711.7,592.9 L713.2,579.2 L714.7,561.7 L716.2,578.8 L717.7,552.7 L719.2,559.5 L720.7,558.5 L722.2,570.1 L723.7,566.8 L725.2,574.4 L726.7,575.5 L728.2,576.1 L729.7,573.1 L731.2,570.8 L732.7,583.1 L734.2,579.9 L735.7,577 L737.2,583.1 L738.7,573.4 L740.2,577.4 L741.7,583.1 L743.2,582.7 L744.7,579.8 L746.2,583.1 L747.7,575.9 L749.2,573.1 L750.7,575.1 L752.2,574.8 L753.7,575.8 L755.2,583.1 L756.7,577.3 L758.2,586 L759.7,585.2 L761.2,586.5 L762.7,583.7 L764.2,558.5 L765.7,578 L767.2,584.7 L768.7,586 L770.2,585.4 L771.7,587.5 L773.2,586 L774.7,587.5 L776.2,578.4 L777.7,586.3 L779.2,587.5 L780.7,576.4 L782.2,574.7 L783.7,577.3 L785.2,578.5 L786.7,575 L788.2,578.2 L789.7,586.1 L791.2,582.6 L792.7,573.9 L794.2,586.6 L795.7,581.9 L797.2,585.3 L798.7,575.8 L800.2,580.9 L801.7,576.8 L803.2,576.8 L804.7,565.4 L806.2,579.2 L807.7,592.9 L809.2,592.9 L810.7,592.9 L812.2,588.5 L813.7,592.4" fill="none" stroke="#6ed0e0" stroke-width="1.1" stroke-linejoin="round"/><path d="M95.2,593.9 L96.7,593.9 L98.2,593.9 L99.7,593.9 L101.2,593.9 L102.7,593.9 L104.2,593.9 L105.7,593.9 L107.2,593.9 L108.7,593.9 L110.2,593.9 L111.7,593.9 L113.2,593.9 L114.7,593.9 L116.2,593.9 L117.7,593.9 L119.2,593.9 L120.7,593.9 L122.2,593.9 L123.7,593.9 L125.2,593.9 L126.7,593.9 L128.2,593.9 L129.7,593.9 L131.2,593.9 L132.7,593.9 L134.2,593.9 L135.7,593.9 L137.2,593.9 L138.7,593.9 L140.2,593.9 L141.7,593.9 L143.2,593.9 L144.7,593.9 L146.2,593.9 L147.7,593.9 L149.2,593.9 L150.7,593.9 L152.2,593.9 L153.7,593.9 L155.2,593.9 L156.7,593.9 L158.2,593.9 L159.7,593.9 L161.2,593.9 L162.7,593.9 L164.2,593.9 L165.7,593.9 L167.2,593.9 L168.7,593.9 L170.2,593.9 L171.7,593.9 L173.2,593.9 L174.7,593.9 L176.2,593.9 L177.7,593.9 L179.2,593.9 L180.7,593.9 L182.2,593.9 L183.7,593.9 L185.2,593.9 L186.7,593.9 L188.2,593.9 L189.7,593.9 L191.2,593.9 L192.7,593.9 L194.2,593.9 L195.7,593.9 L197.2,593.9 L198.7,593.9 L200.2,593.9 L201.7,593.9 L203.2,593.9 L204.7,593.9 L206.2,593.9 L207.7,593.9 L209.2,593.9 L210.7,593.9 L212.2,593.9 L213.7,593.9 L215.2,593.9 L216.7,593.9 L218.2,593.9 L219.7,593.9 L221.2,593.9 L222.7,593.9 L224.2,593.9 L225.7,593.9 L227.2,593.9 L228.7,593.9 L230.2,593.9 L231.7,593.9 L233.2,593.9 L234.7,593.9 L236.2,593.9 L237.7,593.9 L239.2,593.9 L240.7,593.9 L242.2,593.9 L243.7,593.9 L245.2,593.9 L246.7,593.9 L248.2,593.9 L249.7,593.9 L251.2,593.9 L252.7,593.9 L254.2,593.9 L255.7,593.9 L257.2,593.9 L258.7,593.9 L260.2,593.9 L261.7,593.9 L263.2,593.9 L264.7,593.9 L266.2,593.9 L267.7,593.9 L269.2,593.9 L270.7,593.9 L272.2,593.9 L273.7,593.9 L275.2,593.9 L276.7,593.9 L278.2,593.9 L279.7,593.9 L281.2,593.9 L282.7,593.9 L284.2,593.9 L285.7,593.9 L287.2,593.9 L288.7,593.9 L290.2,593.9 L291.7,593.9 L293.2,593.9 L294.7,593.9 L296.2,593.9 L297.7,593.9 L299.2,593.9 L300.7,593.9 L302.2,593.9 L303.7,593.9 L305.2,593.9 L306.7,593.9 L308.2,593.9 L309.7,593.9 L311.2,593.9 L312.7,593.9 L314.2,593.9 L315.7,593.9 L317.2,593.9 L318.7,593.9 L320.2,593.9 L321.7,593.9 L323.2,593.9 L324.7,593.9 L326.2,593.9 L327.7,593.9 L329.2,593.9 L330.7,593.9 L332.2,593.9 L333.7,593.9 L335.2,593.9 L336.7,593.9 L338.2,593.9 L339.7,593.9 L341.2,593.9 L342.7,593.9 L344.2,593.9 L345.7,593.9 L347.2,593.9 L348.7,593.9 L350.2,593.9 L351.7,593.9 L353.2,593.9 L354.7,593.9 L356.2,593.9 L357.7,593.9 L359.2,593.9 L360.7,593.9 L362.2,593.9 L363.7,593.9 L365.2,593.9 L366.7,593.9 L368.2,593.9 L369.7,593.9 L371.2,593.9 L372.7,593.9 L374.2,593.9 L375.7,593.9 L377.2,593.9 L378.7,593.9 L380.2,593.9 L381.7,593.9 L383.2,593.9 L384.7,593.9 L386.2,593.9 L387.7,593.9 L389.2,593.9 L390.7,593.9 L392.2,593.9 L393.7,593.9 L395.2,593.9 L396.7,593.9 L398.2,593.9 L399.7,593.9 L401.2,593.9 L402.7,593.9 L404.2,593.9 L405.7,593.9 L407.2,593.9 L408.7,593.9 L410.2,593.9 L411.7,593.9 L413.2,593.9 L414.7,593.9 L416.2,593.9 L417.7,593.9 L419.2,593.9 L420.7,593.9 L422.2,593.9 L423.7,593.9 L425.2,593.9 L426.7,593.9 L428.2,593.9 L429.7,593.9 L431.2,593.9 L432.7,593.9 L434.2,593.9 L435.7,593.9 L437.2,593.9 L438.7,593.9 L440.2,593.9 L441.7,593.9 L443.2,593.9 L444.7,593.9 L446.2,593.9 L447.7,593.9 L449.2,593.9 L450.7,593.9 L452.2,593.9 L453.7,593.9 L455.2,593.9 L456.7,593.9 L458.2,593.9 L459.7,593.9 L461.2,593.9 L462.7,593.9 L464.2,593.9 L465.7,593.9 L467.2,593.9 L468.7,593.9 L470.2,593.9 L471.7,593.9 L473.2,593.9 L474.7,593.9 L476.2,593.9 L477.7,593.9 L479.2,593.9 L480.7,593.9 L482.2,593.9 L483.7,593.9 L485.2,593.9 L486.7,593.9 L488.2,593.9 L489.7,593.9 L491.2,593.9 L492.7,593.9 L494.2,593.9 L495.7,593.9 L497.2,593.9 L498.7,593.9 L500.2,593.9 L501.7,593.9 L503.2,593.9 L504.7,593.9 L506.2,593.9 L507.7,593.9 L509.2,593.9 L510.7,593.9 L512.2,593.9 L513.7,593.9 L515.2,593.9 L516.7,593.9 L518.2,593.9 L519.7,593.9 L521.2,593.9 L522.7,593.9 L524.2,593.9 L525.7,593.9 L527.2,593.9 L528.7,593.9 L530.2,595.4 L531.7,596.1 L533.2,596.1 L534.7,596.1 L536.2,595.4 L537.7,594.9 L539.2,594.9 L540.7,594.9 L542.2,594.9 L543.7,594.9 L545.2,594.9 L546.7,594.9 L548.2,594.9 L549.7,594.9 L551.2,594.9 L552.7,594.9 L554.2,594.9 L555.7,594.9 L557.2,594.9 L558.7,594.9 L560.2,594.9 L561.7,594.9 L563.2,594.9 L564.7,594.9 L566.2,594.9 L567.7,594.9 L569.2,594.9 L570.7,601.3 L572.2,601.3 L573.7,597.3 L575.2,597.3 L576.7,595.4 L578.2,595.4 L579.7,595.4 L581.2,595.4 L582.7,595.4 L584.2,595.4 L585.7,597.3 L587.2,597.3 L588.7,597.3 L590.2,597.3 L591.7,640.3 L593.2,643.8 L594.7,632 L596.2,646.1 L597.7,603.5 L599.2,598.9 L600.7,601.9 L602.2,619.8 L603.7,643.7 L605.2,645.5 L606.7,640.2 L608.2,645.6 L609.7,639.2 L611.2,637.2 L612.7,635.1 L614.2,639.8 L615.7,626.9 L617.2,634.1 L618.7,640.9 L620.2,654.5 L621.7,615 L623.2,643 L624.7,643.3 L626.2,626.1 L627.7,615 L629.2,652.7 L630.7,630.3 L632.2,636.7 L633.7,630.4 L635.2,645.4 L636.7,643.7 L638.2,631 L639.7,623.5 L641.2,645.4 L642.7,634.2 L644.2,647.8 L645.7,622.9 L647.2,655.8 L648.7,653.2 L650.2,622.3 L651.7,631.3 L653.2,647 L654.7,636.3 L656.2,631.2 L657.7,622.4 L659.2,651.4 L660.7,647 L662.2,641 L663.7,651.5 L665.2,629.9 L666.7,642 L668.2,651.3 L669.7,650.2 L671.2,647.9 L672.7,654.5 L674.2,655.8 L675.7,630.2 L677.2,628.4 L678.7,632.1 L680.2,632.9 L681.7,652.5 L683.2,642.3 L684.7,636.9 L686.2,649.7 L687.7,628.2 L689.2,642.3 L690.7,639.6 L692.2,646.6 L693.7,640.4 L695.2,636.7 L696.7,635 L698.2,625.5 L699.7,615 L701.2,632.9 L702.7,626.6 L704.2,634.8 L705.7,624.8 L707.2,645.1 L708.7,615.7 L710.2,595.6 L711.7,595.6 L713.2,618.5 L714.7,649.6 L716.2,621.6 L717.7,677.4 L719.2,660.2 L720.7,641.5 L722.2,653.9 L723.7,636.6 L725.2,653.3 L726.7,627.1 L728.2,615.6 L729.7,617.1 L731.2,632.3 L732.7,634.4 L734.2,625 L735.7,626.9 L737.2,647.2 L738.7,603.7 L740.2,608.9 L741.7,607.8 L743.2,603.8 L744.7,607.1 L746.2,637.5 L747.7,616.7 L749.2,616.6 L750.7,617 L752.2,623.8 L753.7,613.7 L755.2,619 L756.7,635.4 L758.2,621.3 L759.7,608.8 L761.2,606.3 L762.7,615.9 L764.2,657.7 L765.7,605 L767.2,606.3 L768.7,601.8 L770.2,614.8 L771.7,608.3 L773.2,613.3 L774.7,609.5 L776.2,608.3 L777.7,616.5 L779.2,616.7 L780.7,616.6 L782.2,609.4 L783.7,610.5 L785.2,608 L786.7,608.2 L788.2,603.5 L789.7,616.6 L791.2,608.3 L792.7,614.2 L794.2,611.4 L795.7,612.3 L797.2,606.4 L798.7,611.7 L800.2,613.2 L801.7,605.1 L803.2,608.5 L804.7,621.4 L806.2,603.7 L807.7,595.4 L809.2,595.4 L810.7,595.4 L812.2,600.3 L813.7,595.9" fill="none" stroke="#1f78c1" stroke-width="1.1" stroke-linejoin="round"/><defs><linearGradient id="zl" gradientUnits="userSpaceOnUse" x1="390" y1="0" x2="528" y2="0"><stop offset="0" stop-color="#5882b9"/><stop offset="1" stop-color="#8c86a2"/></linearGradient></defs><path d="M95.2,594 H529.7" stroke="url(#zl)" stroke-width="2" fill="none"/><path d="M529.7,594.7 H590.3" stroke="#6d6ca6" stroke-width="1.5" fill="none"/><path d="M529.7,593.4 H590.3" stroke="#6ed0e0" stroke-width="1.2" fill="none"/><path d="M568.7,594 H575.7" stroke="#e0a040" stroke-width="2.4" fill="none"/><path d="M590.3,592.65 H815" stroke="#d4b845" stroke-width="1.5" fill="none"/><path d="M590.3,593.7 H815" stroke="#b4ae55" stroke-width="0.7" fill="none"/><path d="M590.3,594.9 H815" stroke="#e67a3a" stroke-width="1.8" fill="none"/><path d="M590.3,596.4 H815" stroke="#e2604a" stroke-width="1.2" fill="none"/></svg>
<div class="t ax" style="right:1603.4px;top:535px;">10 kBps</div>
<div class="t ax" style="right:1603.4px;top:561.4px;">5 kBps</div>
<div class="t ax" style="right:1603.4px;top:587.8px;">0 Bps</div>
<div class="t ax" style="right:1603.4px;top:614.2px;">-5 kBps</div>
<div class="t ax" style="right:1603.4px;top:640.6px;">-10 kBps</div>
<div class="t ax" style="right:1603.4px;top:667px;">-15 kBps</div>
<div class="t ax" style="right:1603.4px;top:693.4px;">-20 kBps</div>
<div class="t ax c" style="left:-96.3px;width:400px;top:707px;">07:30</div>
<div class="t ax c" style="left:-36.3px;width:400px;top:707px;">08:00</div>
<div class="t ax c" style="left:23.7px;width:400px;top:707px;">08:30</div>
<div class="t ax c" style="left:83.7px;width:400px;top:707px;">09:00</div>
<div class="t ax c" style="left:143.7px;width:400px;top:707px;">09:30</div>
<div class="t ax c" style="left:203.7px;width:400px;top:707px;">10:00</div>
<div class="t ax c" style="left:263.7px;width:400px;top:707px;">10:30</div>
<div class="t ax c" style="left:323.7px;width:400px;top:707px;">11:00</div>
<div class="t ax c" style="left:383.7px;width:400px;top:707px;">11:30</div>
<div class="t ax c" style="left:443.7px;width:400px;top:707px;">12:00</div>
<div class="t ax c" style="left:503.7px;width:400px;top:707px;">12:30</div>
<div class="t ax c" style="left:563.7px;width:400px;top:707px;">13:00</div>
<div class="t ax yl" style="left:-77.8px;top:621px;width:200px">Bytes per second</div>
<div class="t lh" style="right:1124px;top:729.8px;">min</div>
<div class="t lh" style="right:1038px;top:729.8px;">max</div>
<div class="t lh" style="right:959px;top:729.8px;">avg</div>
<div class="t lh" style="right:889px;top:729.8px;">current</div>
<div class="li" style="left:36px;top:757px;background:#7eb26d"></div>
<div class="t lg" style="left:56.5px;top:749.9px;letter-spacing:0.096px">Control (Ingress)</div>
<div class="t lg" style="right:1124px;top:749.9px;">0 Bps</div>
<div class="t lg" style="right:1038px;top:749.9px;">195 Bps</div>
<div class="t lg" style="right:959px;top:749.9px;">22 Bps</div>
<div class="t lg" style="right:889px;top:749.9px;">42 Bps</div>
<div class="stripe" style="left:36px;top:767px;width:779px"></div>
<div class="li" style="left:36px;top:778px;background:#eab839"></div>
<div class="t lg" style="left:56.5px;top:770.9px;letter-spacing:-0.021px">Keepalive (Ingress)</div>
<div class="t lg" style="right:1124px;top:770.9px;">0 Bps</div>
<div class="t lg" style="right:1038px;top:770.9px;">253 Bps</div>
<div class="t lg" style="right:959px;top:770.9px;">86 Bps</div>
<div class="t lg" style="right:889px;top:770.9px;">158 Bps</div>
<div class="li" style="left:36px;top:799px;background:#6ed0e0"></div>
<div class="t lg" style="left:56.5px;top:791.9px;letter-spacing:-0.074px">Speech (Ingress)</div>
<div class="t lg" style="right:1124px;top:791.9px;">0 Bps</div>
<div class="t lg" style="right:1038px;top:791.9px;">7.63 kBps</div>
<div class="t lg" style="right:959px;top:791.9px;">1.04 kBps</div>
<div class="t lg" style="right:889px;top:791.9px;">0 Bps</div>
<div class="stripe" style="left:36px;top:809px;width:779px"></div>
<div class="li" style="left:36px;top:820px;background:#ef843c"></div>
<div class="t lg" style="left:56.5px;top:812.9px;letter-spacing:-0.016px">Control (Egress)</div>
<div class="t lg" style="right:1124px;top:812.9px;">0 Bps</div>
<div class="t lg" style="right:1038px;top:812.9px;">744 Bps</div>
<div class="t lg" style="right:959px;top:812.9px;">90 Bps</div>
<div class="t lg" style="right:889px;top:812.9px;">170 Bps</div>
<div class="li" style="left:36px;top:841px;background:#e24d42"></div>
<div class="t lg" style="left:56.5px;top:833.9px;letter-spacing:-0.116px">Keepalive (Egress)</div>
<div class="t lg" style="right:1124px;top:833.9px;">0 Bps</div>
<div class="t lg" style="right:1038px;top:833.9px;">247 Bps</div>
<div class="t lg" style="right:959px;top:833.9px;">84 Bps</div>
<div class="t lg" style="right:889px;top:833.9px;">164 Bps</div>
<div class="stripe" style="left:36px;top:851px;width:779px"></div>
<div class="li" style="left:36px;top:862px;background:#1f78c1"></div>
<div class="t lg" style="left:56.5px;top:854.9px;letter-spacing:-0.205px">Speech (Egress)</div>
<div class="t lg" style="right:1124px;top:854.9px;">0 Bps</div>
<div class="t lg" style="right:1038px;top:854.9px;">15.26 kBps</div>
<div class="t lg" style="right:959px;top:854.9px;">1.87 kBps</div>
<div class="t lg" style="right:889px;top:854.9px;">0 Bps</div>
<div class="panel" style="left:852px;top:506px;width:830px;height:373px"><i class="rz"></i></div>
<div class="t pt c" style="left:1067.6px;width:400px;top:512px;">Average Packetloss by Type</div>
<svg class="abs" style="left:0;top:0" width="1694" height="897" viewBox="0 0 1694 897"><path d="M922.2,541.5 H1656 M922.2,591.5 H1656 M922.2,641.5 H1656 M922.2,691.5 H1656 M922.2,741.5 H1656" stroke="#c8c8c8" stroke-opacity="0.18" stroke-width="1" fill="none" shape-rendering="crispEdges"/><path d="M930.5,541.4 V741.4 M991.5,541.4 V741.4 M1053.5,541.4 V741.4 M1114.5,541.4 V741.4 M1175.5,541.4 V741.4 M1236.5,541.4 V741.4 M1297.5,541.4 V741.4 M1359.5,541.4 V741.4 M1420.5,541.4 V741.4 M1481.5,541.4 V741.4 M1542.5,541.4 V741.4 M1604.5,541.4 V741.4" stroke="#c8c8c8" stroke-opacity="0.18" stroke-width="1" fill="none" shape-rendering="crispEdges"/><path d="M922.2,741 L1390.6,741 L1391.6,741 L1393.1,731.1 L1394.5,715.2 L1397,726.2 L1400.7,736 L1406.8,740.5 L1409.2,741 L1411.2,737.3 L1412.9,738.5 L1414.6,727.5 L1417.8,717.7 L1420.3,691.9 L1422,662.5 L1423.5,642.3 L1424.5,677.2 L1425.7,700.5 L1427.6,682.1 L1429.6,667.4 L1431.3,660.5 L1432.8,664.9 L1433.8,663.7 L1435.2,677.2 L1436.7,689.4 L1438.2,662.5 L1439.4,652.6 L1440.6,630.6 L1442.4,637.9 L1444.3,644.1 L1446,657.6 L1447.5,677.2 L1449,696.8 L1450.9,711.5 L1452.9,722.6 L1454.6,726.2 L1456.3,732.4 L1458.3,734.1 L1460.8,737.3 L1462.7,728.7 L1464.4,729.2 L1466.2,733.6 L1468.6,738 L1471.1,739 L1473,734.1 L1476,733.6 L1478.4,736 L1480.9,739.7 L1482.8,738.5 L1484.8,730.7 L1486.5,731.6 L1488.2,736.5 L1490.7,738 L1493.1,739.7 L1495.6,738 L1497.6,739 L1500,737.3 L1501.5,738.5 L1502.7,718.9 L1503.7,699.3 L1504.9,704.7 L1506.4,716.4 L1507.9,723.3 L1509.8,722.6 L1512.3,723.3 L1514.7,721.3 L1516.7,718.4 L1518.6,720.1 L1520.4,718.4 L1522.1,725 L1524,732.4 L1525.8,731.1 L1528.2,734.1 L1530.7,738 L1532.6,739.7 L1534.3,734.1 L1536.8,733.6 L1539.3,738 L1541.7,740 L1544.7,741 L1547.1,741 L1548.1,706.6 L1549.1,705.4 L1550.5,642.8 L1551.5,637.9 L1552.5,571.7 L1554,574.2 L1554.7,597.5 L1555.7,599.9 L1556.7,622 L1557.7,623.2 L1558.6,649.7 L1559.6,649 L1560.8,662.5 L1561.8,662.5 L1563.3,645.3 L1565,640.9 L1566.2,641.6 L1567.7,662.5 L1569.2,687 L1570.7,706.6 L1572.1,717.7 L1574.1,723.8 L1576,729.9 L1578,734.1 L1580,734.1 L1581.9,718.9 L1583.9,710.3 L1585.4,718.9 L1587.3,726.2 L1589.5,731.6 L1592,731.6 L1594.4,734.8 L1596.9,733.6 L1599.4,737.3 L1601.8,740 L1604.3,740.5 L1606.7,734.8 L1609.2,732.4 L1611.6,732.4 L1613.3,716.4 L1615.3,712 L1617.3,715.2 L1619.2,722.6 L1621.2,727.5 L1623.1,733.6 L1625.6,732.4 L1628.1,730.7 L1630,734.8 L1632.5,731.1 L1634.4,728.2 L1636.1,727.5 L1637.9,712.7 L1639.3,718.9 L1641.3,723.8 L1643.3,729.9 L1645.2,734.8 L1646.7,711.5 L1648.2,667.4 L1649.6,628.1 L1651.1,609.7 L1652.6,618.3 L1653.6,623.2 L1654.5,620.8 L1655.8,619.5 L1655.8,741.4 L922.2,741.4 Z" fill="#eab839" fill-opacity="0.14"/><path d="M922.2,741 L1390.6,741 L1391.6,741 L1393.1,731.1 L1394.5,715.2 L1397,726.2 L1400.7,736 L1406.8,740.5 L1409.2,741 L1411.2,737.3 L1412.9,738.5 L1414.6,727.5 L1417.8,717.7 L1420.3,691.9 L1422,662.5 L1423.5,642.3 L1424.5,677.2 L1425.7,700.5 L1427.6,682.1 L1429.6,667.4 L1431.3,660.5 L1432.8,664.9 L1433.8,663.7 L1435.2,677.2 L1436.7,689.4 L1438.2,662.5 L1439.4,652.6 L1440.6,630.6 L1442.4,637.9 L1444.3,644.1 L1446,657.6 L1447.5,677.2 L1449,696.8 L1450.9,711.5 L1452.9,722.6 L1454.6,726.2 L1456.3,732.4 L1458.3,734.1 L1460.8,737.3 L1462.7,728.7 L1464.4,729.2 L1466.2,733.6 L1468.6,738 L1471.1,739 L1473,734.1 L1476,733.6 L1478.4,736 L1480.9,739.7 L1482.8,738.5 L1484.8,730.7 L1486.5,731.6 L1488.2,736.5 L1490.7,738 L1493.1,739.7 L1495.6,738 L1497.6,739 L1500,737.3 L1501.5,738.5 L1502.7,718.9 L1503.7,699.3 L1504.9,704.7 L1506.4,716.4 L1507.9,723.3 L1509.8,722.6 L1512.3,723.3 L1514.7,721.3 L1516.7,718.4 L1518.6,720.1 L1520.4,718.4 L1522.1,725 L1524,732.4 L1525.8,731.1 L1528.2,734.1 L1530.7,738 L1532.6,739.7 L1534.3,734.1 L1536.8,733.6 L1539.3,738 L1541.7,740 L1544.7,741 L1547.1,741 L1548.1,706.6 L1549.1,705.4 L1550.5,642.8 L1551.5,637.9 L1552.5,571.7 L1554,574.2 L1554.7,597.5 L1555.7,599.9 L1556.7,622 L1557.7,623.2 L1558.6,649.7 L1559.6,649 L1560.8,662.5 L1561.8,662.5 L1563.3,645.3 L1565,640.9 L1566.2,641.6 L1567.7,662.5 L1569.2,687 L1570.7,706.6 L1572.1,717.7 L1574.1,723.8 L1576,729.9 L1578,734.1 L1580,734.1 L1581.9,718.9 L1583.9,710.3 L1585.4,718.9 L1587.3,726.2 L1589.5,731.6 L1592,731.6 L1594.4,734.8 L1596.9,733.6 L1599.4,737.3 L1601.8,740 L1604.3,740.5 L1606.7,734.8 L1609.2,732.4 L1611.6,732.4 L1613.3,716.4 L1615.3,712 L1617.3,715.2 L1619.2,722.6 L1621.2,727.5 L1623.1,733.6 L1625.6,732.4 L1628.1,730.7 L1630,734.8 L1632.5,731.1 L1634.4,728.2 L1636.1,727.5 L1637.9,712.7 L1639.3,718.9 L1641.3,723.8 L1643.3,729.9 L1645.2,734.8 L1646.7,711.5 L1648.2,667.4 L1649.6,628.1 L1651.1,609.7 L1652.6,618.3 L1653.6,623.2 L1654.5,620.8 L1655.8,619.5" fill="none" stroke="#eab839" stroke-width="1.2" stroke-linejoin="round"/><path d="M922.2,742 H1656" stroke="#ef9a5c" stroke-width="2" fill="none"/></svg>
<div class="t ax" style="right:776.4px;top:534.9px;">8.00%</div>
<div class="t ax" style="right:776.4px;top:584.9px;">6.00%</div>
<div class="t ax" style="right:776.4px;top:634.9px;">4.00%</div>
<div class="t ax" style="right:776.4px;top:684.9px;">2.00%</div>
<div class="t ax" style="right:776.4px;top:734.9px;">0%</div>
<div class="t ax c" style="left:730.6px;width:400px;top:748.4px;">07:30</div>
<div class="t ax c" style="left:791.8px;width:400px;top:748.4px;">08:00</div>
<div class="t ax c" style="left:853px;width:400px;top:748.4px;">08:30</div>
<div class="t ax c" style="left:914.3px;width:400px;top:748.4px;">09:00</div>
<div class="t ax c" style="left:975.5px;width:400px;top:748.4px;">09:30</div>
<div class="t ax c" style="left:1036.7px;width:400px;top:748.4px;">10:00</div>
<div class="t ax c" style="left:1097.9px;width:400px;top:748.4px;">10:30</div>
<div class="t ax c" style="left:1159.1px;width:400px;top:748.4px;">11:00</div>
<div class="t ax c" style="left:1220.4px;width:400px;top:748.4px;">11:30</div>
<div class="t ax c" style="left:1281.6px;width:400px;top:748.4px;">12:00</div>
<div class="t ax c" style="left:1342.8px;width:400px;top:748.4px;">12:30</div>
<div class="t ax c" style="left:1404px;width:400px;top:748.4px;">13:00</div>
<div class="t ax yl" style="left:763.2px;top:642px;width:200px">Packetloss</div>
<div class="t lh" style="right:246.4px;top:771.8px;">min</div>
<div class="t lh" style="right:180.2px;top:771.8px;">max</div>
<div class="t lh" style="right:114px;top:771.8px;">avg</div>
<div class="t lh" style="right:48.2px;top:771.8px;">current</div>
<div class="li" style="left:877px;top:799px;background:#7eb26d"></div>
<div class="t lg" style="left:897.5px;top:791.9px;letter-spacing:0.359px">Control</div>
<div class="t lg" style="right:246.4px;top:791.9px;">0%</div>
<div class="t lg" style="right:180.2px;top:791.9px;">0%</div>
<div class="t lg" style="right:114px;top:791.9px;">0%</div>
<div class="t lg" style="right:48.2px;top:791.9px;">0%</div>
<div class="stripe" style="left:877px;top:809px;width:779px"></div>
<div class="li" style="left:877px;top:820px;background:#eab839"></div>
<div class="t lg" style="left:897.5px;top:812.9px;letter-spacing:0.087px">Keepalive</div>
<div class="t lg" style="right:246.4px;top:812.9px;">0%</div>
<div class="t lg" style="right:180.2px;top:812.9px;">6.780%</div>
<div class="t lg" style="right:114px;top:812.9px;">0.420%</div>
<div class="t lg" style="right:48.2px;top:812.9px;">4.880%</div>
<div class="li" style="left:877px;top:841px;background:#6ed0e0"></div>
<div class="t lg" style="left:897.5px;top:833.9px;letter-spacing:-0.117px">Speech</div>
<div class="t lg" style="right:246.4px;top:833.9px;">0%</div>
<div class="t lg" style="right:180.2px;top:833.9px;">0%</div>
<div class="t lg" style="right:114px;top:833.9px;">0%</div>
<div class="t lg" style="right:48.2px;top:833.9px;">0%</div>
<div class="stripe" style="left:877px;top:851px;width:779px"></div>
<div class="li" style="left:877px;top:862px;background:#ef843c"></div>
<div class="t lg" style="left:897.5px;top:854.9px;letter-spacing:0.183px">Overall</div>
<div class="t lg" style="right:246.4px;top:854.9px;">0%</div>
<div class="t lg" style="right:180.2px;top:854.9px;">0%</div>
<div class="t lg" style="right:114px;top:854.9px;">0%</div>
<div class="t lg" style="right:48.2px;top:854.9px;">0%</div>
<div class="addrow"><span>+ ADD ROW</span></div>
<div style="position:absolute;left:28px;top:896px;width:2px;height:1px;background:#b9b0a0"></div>
</body></html>
